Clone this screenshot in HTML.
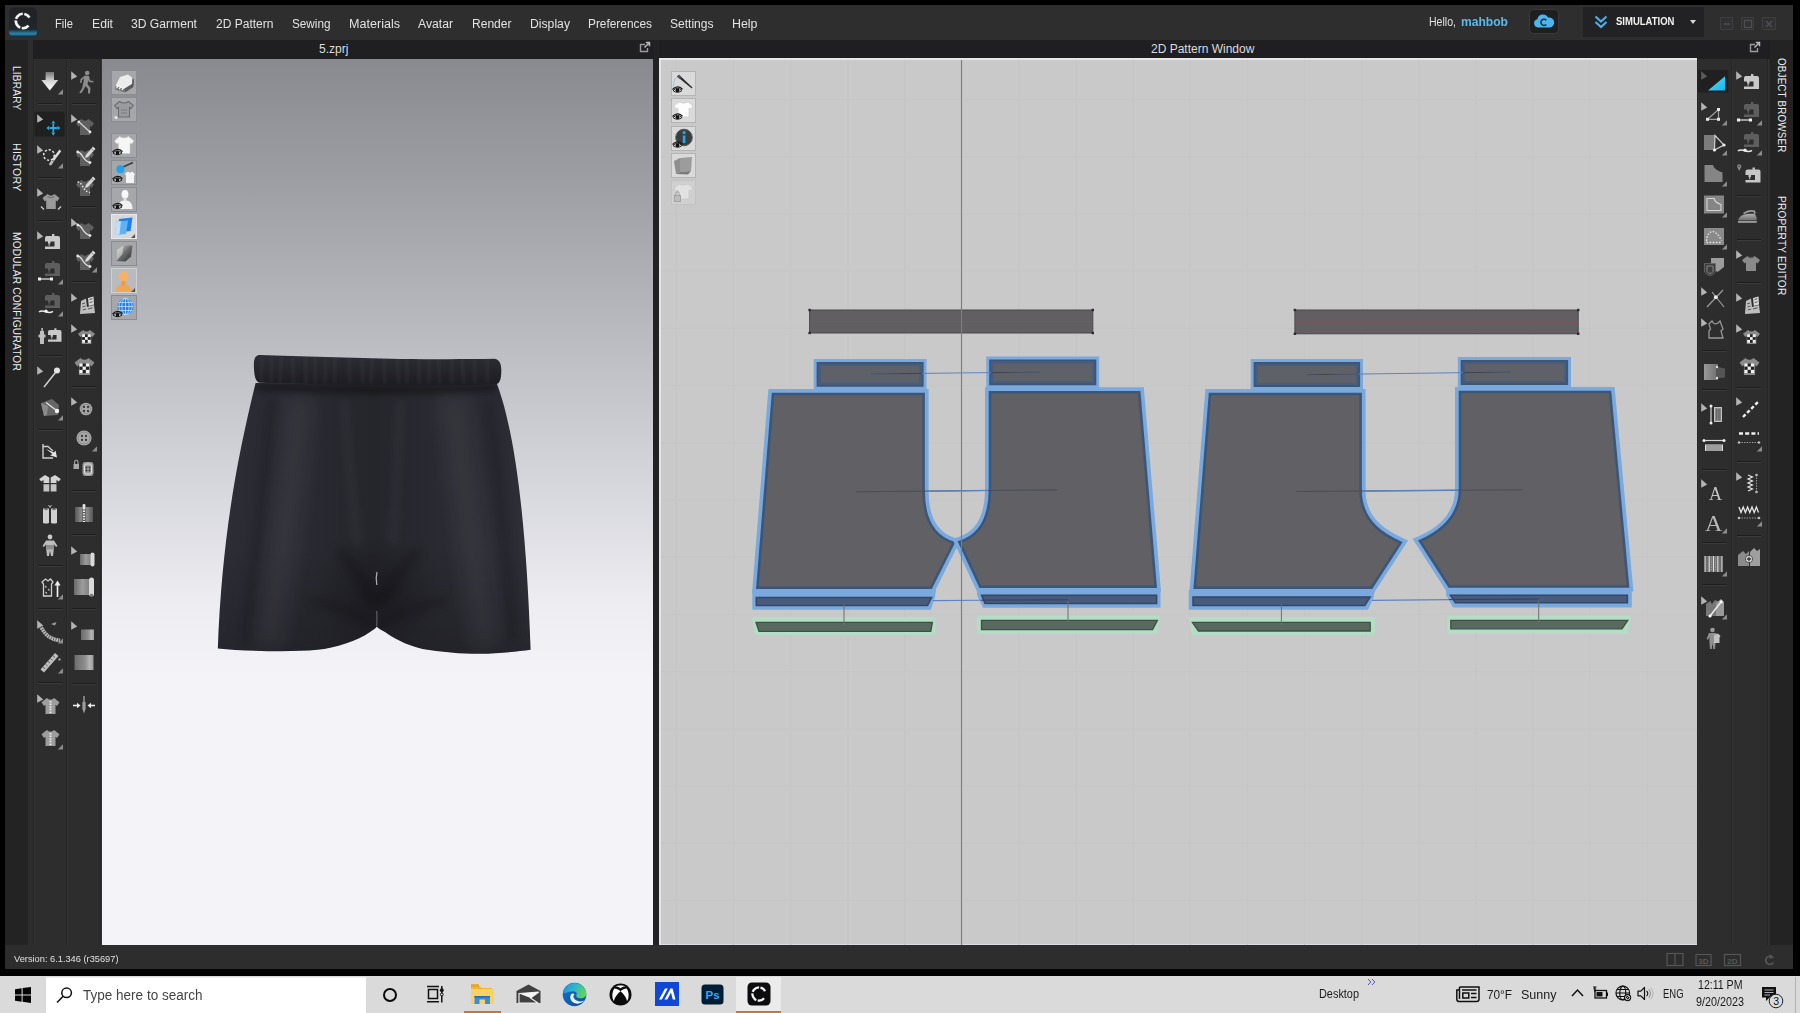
<!DOCTYPE html>
<html lang="en"><head><meta charset="utf-8"><title>CLO - 5.zprj</title>
<style>
*{box-sizing:border-box;margin:0;padding:0}
html,body{width:1800px;height:1013px;overflow:hidden;background:#000;font-family:"Liberation Sans",sans-serif;}
#root{position:absolute;left:0;top:0;width:1800px;height:1013px;background:#000;overflow:hidden}
.abs{position:absolute}
.menubar{left:5px;top:5px;width:1788px;height:35px;background:#2e2e2e}
.mi{position:absolute;top:16px;height:16px;line-height:16px;font-size:12.5px;color:#e2e2e2;white-space:nowrap;transform-origin:0 50%}
.ptitle{position:absolute;top:40px;height:19px;background:#1f1f22;color:#dcdcdc;font-size:12px;line-height:18px;text-align:center}
.vtabs{position:absolute;background:#232324}
.vt{position:absolute;color:#ececec;font-size:11px;letter-spacing:0.2px;white-space:nowrap;transform-origin:0 0;transform:rotate(90deg);line-height:12px;height:12px}
.tb{position:absolute;background:#2d2d2d}
.view3d{left:102px;top:59px;width:551px;height:886px;background:linear-gradient(to bottom,#898a8f 0px,#9d9ea3 120px,#b9babf 270px,#d7d8dd 430px,#ececf1 540px,#f3f3f8 620px,#f3f3f8 100%)}
.view2d{left:659px;top:58px;width:1038px;height:887px;background:#c9c9c9;border-left:2px solid #e6e6ea;border-top:2px solid #e6e6ea;border-bottom:1.5px solid #dedee2;overflow:hidden}
.status{left:5px;top:945px;width:1788px;height:24px;background:#2d2d2d}
.taskbar{left:0;top:976px;width:1800px;height:37px;background:#dadada}
.tic{filter:blur(0.35px)}
.tbtxt{position:absolute;color:#1a1a1a;white-space:nowrap}
</style></head>
<body><div id="root">
<div class="abs menubar"></div>
<span class="mi" style="left:55px;transform:scaleX(0.8930)" id="m0">File</span>
<span class="mi" style="left:91.5px;transform:scaleX(0.9746)" id="m1">Edit</span>
<span class="mi" style="left:131px;transform:scaleX(0.9693)" id="m2">3D Garment</span>
<span class="mi" style="left:215.5px;transform:scaleX(0.9621)" id="m3">2D Pattern</span>
<span class="mi" style="left:291.5px;transform:scaleX(0.9390)" id="m4">Sewing</span>
<span class="mi" style="left:348.5px;transform:scaleX(1.0055)" id="m5">Materials</span>
<span class="mi" style="left:418px;transform:scaleX(0.9748)" id="m6">Avatar</span>
<span class="mi" style="left:471.5px;transform:scaleX(0.9634)" id="m7">Render</span>
<span class="mi" style="left:529.5px;transform:scaleX(0.9756)" id="m8">Display</span>
<span class="mi" style="left:587.5px;transform:scaleX(0.9495)" id="m9">Preferences</span>
<span class="mi" style="left:670px;transform:scaleX(0.9630)" id="m10">Settings</span>
<span class="mi" style="left:732px;transform:scaleX(0.9915)" id="m11">Help</span>
<div class="ptitle" style="left:33px;width:620px"><span style="position:absolute;left:286px;top:0">5.zprj</span></div>
<div class="ptitle" style="left:659px;width:1111px"><span style="position:absolute;left:492px;top:0">2D Pattern Window</span></div>
<div class="abs" style="left:653px;top:40px;width:6px;height:905px;background:#222224"></div>
<div class="vtabs" style="left:5px;top:40px;width:23px;height:905px"></div>
<div class="abs" style="left:28px;top:40px;width:5px;height:905px;background:#2d2d2d"></div>
<span class="vt" style="left:23px;top:65.5px;transform:rotate(90deg) scaleX(0.9217)" id="vtl0">LIBRARY</span>
<span class="vt" style="left:23px;top:142.5px;transform:rotate(90deg) scaleX(0.9718)" id="vtl1">HISTORY</span>
<span class="vt" style="left:23px;top:231.5px;transform:rotate(90deg) scaleX(0.9250)" id="vtl2">MODULAR CONFIGURATOR</span>
<div class="vtabs" style="left:1770px;top:40px;width:23px;height:905px"></div>
<span class="vt" style="left:1787.5px;top:58px;transform:rotate(90deg) scaleX(0.8924)" id="vtr0">OBJECT BROWSER</span>
<span class="vt" style="left:1787.5px;top:196px;transform:rotate(90deg) scaleX(0.9253)" id="vtr1">PROPERTY EDITOR</span>
<div class="tb" style="left:33px;top:59px;width:69px;height:886px"></div>
<div class="tb" style="left:1697px;top:59px;width:73px;height:886px"></div>
<div class="abs view3d"></div>
<svg class="abs" style="left:8px;top:7px" width="30" height="31" viewBox="0 0 30 31">
<defs><linearGradient id="lg1" x1="0" y1="0" x2="0" y2="1"><stop offset="0" stop-color="#222225"/><stop offset="0.74" stop-color="#20262b"/><stop offset="0.85" stop-color="#256f93"/><stop offset="0.9" stop-color="#2a86b0"/><stop offset="0.96" stop-color="#1a4660"/><stop offset="1" stop-color="#1b2630"/></linearGradient></defs>
<rect x="1" y="0.5" width="28" height="29.5" rx="5" fill="url(#lg1)"/>
<circle cx="15" cy="14" r="7.2" fill="none" stroke="#f4f4f4" stroke-width="2.6" stroke-dasharray="7.5 1.5 9 1.5 9 1.5 6.5 8.8" transform="rotate(40 15 14)"/>
</svg>
<span class="mi" style="left:1428.5px;top:14px;font-size:12.5px;transform:scaleX(0.8446)" id="hello">Hello,</span>
<span class="mi" style="left:1460.5px;top:14px;font-size:12.5px;font-weight:bold;color:#5db9e9;transform:scaleX(0.9669)" id="uname">mahbob</span>
<svg class="abs" style="left:1529px;top:9px" width="30" height="25" viewBox="0 0 30 25">
<rect x="0.5" y="0.5" width="29" height="24" rx="4" fill="#1f1f21" stroke="#3a3a3c"/>
<path d="M9 18.5 a4.2 4.2 0 0 1 -0.6 -8.3 a5.6 5.6 0 0 1 10.6 -1.6 a4.6 4.6 0 0 1 2.2 9.9 z" fill="#4db4ee"/>
<path d="M17.3 11.2 a3.1 3.1 0 1 0 0 4.2" fill="none" stroke="#1f2d3a" stroke-width="1.5"/>
</svg>
<div class="abs" style="left:1583px;top:7px;width:121px;height:30px;background:#222224"></div>
<svg class="abs" style="left:1594px;top:14px" width="14" height="16" viewBox="0 0 14 16">
<path d="M1.5 2.5 L7 7.5 L12.5 2.5 M1.5 8 L7 13 L12.5 8" fill="none" stroke="#4db0e8" stroke-width="2.2"/></svg>
<span class="mi" style="left:1615.5px;top:14px;font-size:10px;font-weight:bold;color:#f2f2f2;transform:scaleX(0.9515)" id="simu">SIMULATION</span>
<div class="abs" style="left:1690px;top:20px;width:0;height:0;border-left:3.5px solid transparent;border-right:3.5px solid transparent;border-top:4px solid #d8d8d8"></div>
<svg class="abs" style="left:1718px;top:15px" width="62" height="18" viewBox="0 0 62 18">
<rect x="2.5" y="2.5" width="12" height="12" fill="#313133" stroke="#3e3e40"/><path d="M6 9 H12" stroke="#4e4e50" stroke-width="1.5"/>
<rect x="23.5" y="2.5" width="12" height="12" fill="#313133" stroke="#3e3e40"/><rect x="26.5" y="5.5" width="7" height="7" fill="none" stroke="#4e4e50" stroke-width="1.3"/>
<rect x="44.5" y="2.5" width="13" height="12" fill="#313133" stroke="#3e3e40"/><path d="M48 6 L54 12 M54 6 L48 12" stroke="#4e4e50" stroke-width="1.5"/>
</svg>
<svg class="abs" style="left:639px;top:41px" width="12" height="12" viewBox="0 0 12 12">
<path d="M6 3.5 H1.5 V10.5 H8.5 V7" fill="none" stroke="#9a9a9c" stroke-width="1.4"/><path d="M5.5 6.5 L10 2 M6.8 1.5 H10.5 V5.2" fill="none" stroke="#b8b8ba" stroke-width="1.5"/></svg>
<svg class="abs" style="left:1749px;top:41px" width="12" height="12" viewBox="0 0 12 12">
<path d="M6 3.5 H1.5 V10.5 H8.5 V7" fill="none" stroke="#9a9a9c" stroke-width="1.4"/><path d="M5.5 6.5 L10 2 M6.8 1.5 H10.5 V5.2" fill="none" stroke="#b8b8ba" stroke-width="1.5"/></svg>
<svg class="abs" style="left:200px;top:340px" width="350" height="330" viewBox="0 0 350 330">
<defs>
<linearGradient id="sg1" x1="0" y1="0" x2="1" y2="0"><stop offset="0" stop-color="#2e2e37"/><stop offset="0.10" stop-color="#2b2b34"/><stop offset="0.3" stop-color="#292931"/><stop offset="0.5" stop-color="#25252c"/><stop offset="0.72" stop-color="#2a2a32"/><stop offset="0.9" stop-color="#2b2b34"/><stop offset="1" stop-color="#2f2f38"/></linearGradient>
<linearGradient id="sg2" x1="0" y1="0" x2="0" y2="1"><stop offset="0" stop-color="#000" stop-opacity="0.0"/><stop offset="0.6" stop-color="#000" stop-opacity="0.0"/><stop offset="1" stop-color="#000" stop-opacity="0.18"/></linearGradient>
<radialGradient id="sg3" cx="0.5" cy="0.5" r="0.5"><stop offset="0" stop-color="#15151a" stop-opacity="0.55"/><stop offset="0.5" stop-color="#15151a" stop-opacity="0.25"/><stop offset="1" stop-color="#15151a" stop-opacity="0"/></radialGradient>
<linearGradient id="bg1" x1="0" y1="0" x2="0" y2="1"><stop offset="0" stop-color="#2d2d35"/><stop offset="0.45" stop-color="#25252c"/><stop offset="1" stop-color="#1c1c22"/></linearGradient>
<filter id="blr" filterUnits="userSpaceOnUse" x="0" y="0" width="350" height="330"><feGaussianBlur stdDeviation="10"/></filter>
<filter id="blr2" filterUnits="userSpaceOnUse" x="0" y="0" width="350" height="330"><feGaussianBlur stdDeviation="3"/></filter>
<filter id="nz" filterUnits="userSpaceOnUse" x="0" y="0" width="350" height="330" color-interpolation-filters="sRGB"><feTurbulence type="fractalNoise" baseFrequency="0.8" numOctaves="2" seed="3" result="n"/><feColorMatrix in="n" type="matrix" values="0 0 0 0 0.155  0 0 0 0 0.155  0 0 0 0 0.185  1.6 1.6 1.6 0 -2.1"/></filter>
<filter id="blr3" filterUnits="userSpaceOnUse" x="0" y="0" width="350" height="330"><feGaussianBlur stdDeviation="5"/></filter>
<filter id="blr4" filterUnits="userSpaceOnUse" x="0" y="0" width="350" height="330"><feGaussianBlur stdDeviation="1.6"/></filter>
<clipPath id="wclip"><path d="M53.9 27.0 C53.5 19.0 55.0 15.0 60.0 15.0 C100.0 16.2 150.0 18.0 200.0 18.9 C240.0 19.3 270.0 19.2 294.0 18.8 C299.5 19.0 301.5 24.0 301.3 31.0 C301.2 39.0 300.0 43.5 296.0 44.2 C260.0 45.5 230.0 45.8 200.0 45.6 C150.0 45.0 100.0 44.0 60.0 42.8 C55.5 42.3 54.2 36.0 53.9 27.0 Z"/></clipPath>
<clipPath id="bclip"><path d="M55.6 43.0 C36.0 123.0 22.0 200.0 17.8 308.4 C45.0 311.0 90.0 312.5 117.5 309.8 C135.0 308.0 158.0 301.0 170.0 292.0 C173.0 290.0 175.5 288.5 176.8 286.5 C178.5 288.5 181.0 290.0 185.0 292.0 C192.0 297.0 205.0 305.0 222.6 308.9 C240.0 312.0 265.0 314.0 280.0 313.8 C300.0 313.5 318.0 311.5 330.6 309.7 C327.0 204.0 318.0 100.0 297.0 44.0 Z"/></clipPath>
</defs>
<path d="M55.6 43.0 C36.0 123.0 22.0 200.0 17.8 308.4 C45.0 311.0 90.0 312.5 117.5 309.8 C135.0 308.0 158.0 301.0 170.0 292.0 C173.0 290.0 175.5 288.5 176.8 286.5 C178.5 288.5 181.0 290.0 185.0 292.0 C192.0 297.0 205.0 305.0 222.6 308.9 C240.0 312.0 265.0 314.0 280.0 313.8 C300.0 313.5 318.0 311.5 330.6 309.7 C327.0 204.0 318.0 100.0 297.0 44.0 Z" fill="url(#sg1)"/>
<g clip-path="url(#bclip)">
<path d="M55.6 43.0 C36.0 123.0 22.0 200.0 17.8 308.4 C45.0 311.0 90.0 312.5 117.5 309.8 C135.0 308.0 158.0 301.0 170.0 292.0 C173.0 290.0 175.5 288.5 176.8 286.5 C178.5 288.5 181.0 290.0 185.0 292.0 C192.0 297.0 205.0 305.0 222.6 308.9 C240.0 312.0 265.0 314.0 280.0 313.8 C300.0 313.5 318.0 311.5 330.6 309.7 C327.0 204.0 318.0 100.0 297.0 44.0 Z" fill="url(#sg2)"/>
<ellipse cx="177" cy="252" rx="62" ry="58" fill="url(#sg3)"/>
<g filter="url(#blr)" opacity="0.05">
<path d="M100.0 55.0 C94.0 130.0 82.0 220.0 68.0 308.0" stroke="#fff" stroke-width="30" fill="none"/>
<path d="M252.0 55.0 C262.0 130.0 274.0 220.0 286.0 308.0" stroke="#fff" stroke-width="30" fill="none"/>
</g>
<g filter="url(#blr3)" opacity="0.2">
<path d="M138.0 208.0 C152.0 226.0 166.0 244.0 174.0 266.0" stroke="#000" stroke-width="9" fill="none"/>
<path d="M220.0 208.0 C204.0 226.0 190.0 244.0 180.0 266.0" stroke="#000" stroke-width="9" fill="none"/>
<path d="M110.0 260.0 C135.0 266.0 158.0 274.0 174.0 284.0" stroke="#000" stroke-width="7" fill="none"/>
<path d="M246.0 260.0 C220.0 266.0 196.0 274.0 180.0 284.0" stroke="#000" stroke-width="7" fill="none"/>
</g>
<g filter="url(#blr3)" opacity="0.035">
<path d="M145.0 60.0 C148.0 110.0 152.0 160.0 158.0 205.0" stroke="#fff" stroke-width="8" fill="none"/>
<path d="M200.0 60.0 C198.0 110.0 196.0 160.0 192.0 205.0" stroke="#fff" stroke-width="8" fill="none"/>
</g>
<g filter="url(#blr3)" opacity="0.16">
<path d="M72.0 60.0 C66.0 130.0 56.0 220.0 46.0 300.0" stroke="#000" stroke-width="8" fill="none"/>
<path d="M288.0 60.0 C298.0 130.0 308.0 220.0 314.0 300.0" stroke="#000" stroke-width="8" fill="none"/>
</g>
<g filter="url(#blr2)" opacity="0.4">
<path d="M56.0 47.0 C130.0 50.0 220.0 51.0 297.0 48.0" stroke="#000" stroke-width="7" fill="none"/>
</g>
</g>
<path d="M53.9 27.0 C53.5 19.0 55.0 15.0 60.0 15.0 C100.0 16.2 150.0 18.0 200.0 18.9 C240.0 19.3 270.0 19.2 294.0 18.8 C299.5 19.0 301.5 24.0 301.3 31.0 C301.2 39.0 300.0 43.5 296.0 44.2 C260.0 45.5 230.0 45.8 200.0 45.6 C150.0 45.0 100.0 44.0 60.0 42.8 C55.5 42.3 54.2 36.0 53.9 27.0 Z" fill="url(#bg1)"/>
<g clip-path="url(#wclip)"><g filter="url(#blr4)" opacity="0.035">
<path d="M62.0 17.0 L61.2 44.0" stroke="#fff" stroke-width="3.5"/>
<path d="M71.5 17.0 L71.2 44.0" stroke="#fff" stroke-width="3.5"/>
<path d="M81.3 17.0 L80.0 44.0" stroke="#fff" stroke-width="3.5"/>
<path d="M92.3 17.0 L93.6 44.0" stroke="#fff" stroke-width="3.5"/>
<path d="M105.3 17.0 L106.1 44.0" stroke="#fff" stroke-width="3.5"/>
<path d="M115.4 17.0 L115.5 44.0" stroke="#fff" stroke-width="3.5"/>
<path d="M125.8 17.0 L124.8 44.0" stroke="#fff" stroke-width="3.5"/>
<path d="M135.3 17.0 L134.5 44.0" stroke="#fff" stroke-width="3.5"/>
<path d="M149.0 17.0 L149.9 44.0" stroke="#fff" stroke-width="3.5"/>
<path d="M162.0 17.0 L162.9 44.0" stroke="#fff" stroke-width="3.5"/>
<path d="M172.0 17.0 L171.4 44.0" stroke="#fff" stroke-width="3.5"/>
<path d="M184.1 17.0 L184.8 44.0" stroke="#fff" stroke-width="3.5"/>
<path d="M197.4 17.0 L198.5 44.0" stroke="#fff" stroke-width="3.5"/>
<path d="M206.8 17.0 L207.1 44.0" stroke="#fff" stroke-width="3.5"/>
<path d="M219.2 17.0 L219.2 44.0" stroke="#fff" stroke-width="3.5"/>
<path d="M229.1 17.0 L229.0 44.0" stroke="#fff" stroke-width="3.5"/>
<path d="M238.5 17.0 L239.8 44.0" stroke="#fff" stroke-width="3.5"/>
<path d="M251.8 17.0 L252.0 44.0" stroke="#fff" stroke-width="3.5"/>
<path d="M262.3 17.0 L263.6 44.0" stroke="#fff" stroke-width="3.5"/>
<path d="M274.2 17.0 L275.3 44.0" stroke="#fff" stroke-width="3.5"/>
<path d="M287.4 17.0 L287.5 44.0" stroke="#fff" stroke-width="3.5"/>
</g></g>
<path d="M177.0 232.0 C176.0 236.0 176.0 241.0 176.8 245.0" stroke="#c9c9d2" stroke-width="1.2" fill="none" opacity="0.85"/>
<path d="M176.8 271.0 C177.0 277.0 177.0 282.0 176.8 286.0" stroke="#8d8d98" stroke-width="1" fill="none" opacity="0.7"/>
</svg>
<svg class="abs" style="left:111px;top:70px" width="26" height="25" viewBox="0 0 26 25"><rect x="0.5" y="0.5" width="25" height="24" fill="#a6a7ab" stroke="#8b8c90" stroke-width="1"/><path d="M4.5 16 L9 7 L17 4.5 L21.5 8 L21 14 L13 19 Z" fill="#ececec"/><path d="M13 19 L21 14 L21.5 8 L23 10 L22.5 17 L14 22.5 Z" fill="#5a5a5c"/><path d="M4.5 16 L13 19 L14 22.5 L4 19.5 Z" fill="#77777a"/><path d="M5.5 18.3 L7 15.5 M8.3 19.2 L9.8 16.4 M11 20 L12.5 17.2" stroke="#fafafa" stroke-width="1.3"/></svg>
<svg class="abs" style="left:111px;top:97px" width="26" height="25" viewBox="0 0 26 25"><rect x="0.5" y="0.5" width="25" height="24" fill="#a6a7ab" stroke="#8b8c90" stroke-width="1"/><path d="M8.5 4.5 Q13 7.5 17.5 4.5 L22.5 8.5 L20 11.5 L18.5 10.5 V20 H7.5 V10.5 L6 11.5 L3.5 8.5 Z" fill="#9a9b9f" stroke="#6c6c70" stroke-width="1.1"/><path d="M10 13 H16 M10 16 H16" stroke="#7a7a7e" stroke-width="1"/><circle cx="5" cy="20.5" r="1.6" fill="#e6e6e6"/></svg>
<svg class="abs" style="left:111px;top:133px" width="26" height="25" viewBox="0 0 26 25"><rect x="0.5" y="0.5" width="25" height="24" fill="#a6a7ab" stroke="#8b8c90" stroke-width="1"/><path d="M8.5 3.5 Q13 6.5 17.5 3.5 L23 8 L20.5 11 L19 10 V20.5 H7.5 V10 L6 11 L3.5 8 Z" fill="#f6f6f6" stroke="#cfcfcf" stroke-width="0.6"/><path d="M2 20 Q6.5 15.8 11 20 Q6.5 23.4 2 20 Z" fill="#e8e8e8" stroke="#1a1a1a" stroke-width="1"/><circle cx="6.5" cy="19.8" r="1.9" fill="#111"/><path d="M1.5 19 Q6.5 14 11.5 18.7" fill="none" stroke="#1a1a1a" stroke-width="1.2"/></svg>
<svg class="abs" style="left:111px;top:160px" width="26" height="25" viewBox="0 0 26 25"><rect x="0.5" y="0.5" width="25" height="24" fill="#a6a7ab" stroke="#8b8c90" stroke-width="1"/><path d="M14 13.5 L17 11.5 L19 13 L21 11.5 L24 14 L23 16 V23 H15 V16 Z" fill="#f4f4f4"/><path d="M11 7.5 L22 2.5" stroke="#3b3b3b" stroke-width="1.4"/><circle cx="9.3" cy="9.2" r="4" fill="#1fa4ec"/><path d="M2 20 Q6.5 15.8 11 20 Q6.5 23.4 2 20 Z" fill="#e8e8e8" stroke="#1a1a1a" stroke-width="1"/><circle cx="6.5" cy="19.8" r="1.9" fill="#111"/><path d="M1.5 19 Q6.5 14 11.5 18.7" fill="none" stroke="#1a1a1a" stroke-width="1.2"/></svg>
<svg class="abs" style="left:111px;top:187px" width="26" height="25" viewBox="0 0 26 25"><rect x="0.5" y="0.5" width="25" height="24" fill="#a6a7ab" stroke="#8b8c90" stroke-width="1"/><ellipse cx="14" cy="7.3" rx="3.4" ry="4.3" fill="#f8f8f8"/><path d="M7 22 C7 15 10 13.5 14 13.5 C18 13.5 21.5 15 21.5 22 Z" fill="#f2f2f2"/><rect x="12.6" y="10.5" width="2.8" height="4" fill="#e6e6e6"/><path d="M2 20 Q6.5 15.8 11 20 Q6.5 23.4 2 20 Z" fill="#e8e8e8" stroke="#1a1a1a" stroke-width="1"/><circle cx="6.5" cy="19.8" r="1.9" fill="#111"/><path d="M1.5 19 Q6.5 14 11.5 18.7" fill="none" stroke="#1a1a1a" stroke-width="1.2"/></svg>
<svg class="abs" style="left:111px;top:214px" width="26" height="25" viewBox="0 0 26 25"><rect x="0.5" y="0.5" width="25" height="24" fill="#a6a7ab" stroke="#8b8c90" stroke-width="1"/><rect x="0.5" y="0.5" width="25" height="24" fill="#d6d8dc" stroke="#e8e8ea"/><path d="M8 5 L21.5 3.5 L19.5 17 L6.5 18.5 Z" fill="#1f7fe6"/><path d="M5.5 7.5 L17 6.5 L15 20 L4 21 Z" fill="#5eb2f6"/><path d="M5.5 7.5 L10 7.1 L8.5 20.6 L4 21 Z" fill="#bfe0fb"/><path d="M24 20 V24 H20 Z" fill="#555"/></svg>
<svg class="abs" style="left:111px;top:241px" width="26" height="25" viewBox="0 0 26 25"><rect x="0.5" y="0.5" width="25" height="24" fill="#a6a7ab" stroke="#8b8c90" stroke-width="1"/><defs><linearGradient id="gsh" x1="0" y1="0" x2="1" y2="1"><stop offset="0" stop-color="#d8d8d8"/><stop offset="0.5" stop-color="#6a6a6c"/><stop offset="1" stop-color="#2e2e30"/></linearGradient></defs><path d="M6 9 L12.5 4.5 L21.5 4.5 L20 15.5 L14.5 20.5 L5.5 20 Z" fill="url(#gsh)"/><path d="M6 9 L12.5 4.5 L11.5 13 L5.5 20 Z" fill="#e4e4e4" opacity="0.55"/></svg>
<svg class="abs" style="left:111px;top:268px" width="26" height="25" viewBox="0 0 26 25"><rect x="0.5" y="0.5" width="25" height="24" fill="#a6a7ab" stroke="#8b8c90" stroke-width="1"/><rect x="0.5" y="0.5" width="25" height="24" fill="#b9babd" stroke="#d0d0d2"/><ellipse cx="12.5" cy="8.8" rx="4.6" ry="5.6" fill="#f3b266"/><path d="M4.5 23.5 C5 17.5 8.5 16.5 12.5 16.5 C16.5 16.5 20 17.5 20.5 23.5 Z" fill="#f0a655"/><rect x="10.6" y="13" width="3.8" height="4.5" fill="#e89b48"/><path d="M24 20 V24 H20 Z" fill="#555"/></svg>
<svg class="abs" style="left:111px;top:295px" width="26" height="25" viewBox="0 0 26 25"><rect x="0.5" y="0.5" width="25" height="24" fill="#a6a7ab" stroke="#8b8c90" stroke-width="1"/><circle cx="14.5" cy="11.5" r="8.2" fill="#2a7fd8"/><g fill="none" stroke="#bfe0ff" stroke-width="0.8"><ellipse cx="14.5" cy="11.5" rx="3.6" ry="8.2"/><ellipse cx="14.5" cy="11.5" rx="6.6" ry="8.2"/><path d="M6.3 11.5 H22.7 M7.3 7.5 H21.7 M7.3 15.5 H21.7 M14.5 3.3 V19.7"/></g><path d="M2 20 Q6.5 15.8 11 20 Q6.5 23.4 2 20 Z" fill="#e8e8e8" stroke="#1a1a1a" stroke-width="1"/><circle cx="6.5" cy="19.8" r="1.9" fill="#111"/><path d="M1.5 19 Q6.5 14 11.5 18.7" fill="none" stroke="#1a1a1a" stroke-width="1.2"/></svg>
<div class="abs view2d"></div>
<svg class="abs" style="left:661px;top:60px" width="1036" height="885" viewBox="0 0 1036 885">
<path d="M15.5 0 V885 M72.6 0 V885 M129.7 0 V885 M186.8 0 V885 M243.9 0 V885 M301.0 0 V885 M358.1 0 V885 M415.2 0 V885 M472.3 0 V885 M529.4 0 V885 M586.5 0 V885 M643.6 0 V885 M700.7 0 V885 M757.8 0 V885 M814.9 0 V885 M872.0 0 V885 M929.1 0 V885 M986.2 0 V885 M0 39.6 H1036 M0 96.8 H1036 M0 154.0 H1036 M0 211.2 H1036 M0 268.4 H1036 M0 325.6 H1036 M0 382.8 H1036 M0 440.0 H1036 M0 497.2 H1036 M0 554.4 H1036 M0 611.6 H1036 M0 668.8 H1036 M0 726.0 H1036 M0 783.2 H1036 M0 840.4 H1036" stroke="#c6c6c7" stroke-width="1.2" fill="none"/>
<rect x="148.6" y="250.0" width="283.2" height="23.0" fill="#625f63" stroke="#4a484c" stroke-width="1"/>
<path d="M148.6 261.5 H431.8" stroke="#9c484e" stroke-width="1"/>
<rect x="147.4" y="248.8" width="2.4" height="2.4" fill="#2a2a2c"/>
<rect x="430.6" y="248.8" width="2.4" height="2.4" fill="#2a2a2c"/>
<rect x="147.4" y="271.8" width="2.4" height="2.4" fill="#2a2a2c"/>
<rect x="430.6" y="271.8" width="2.4" height="2.4" fill="#2a2a2c"/>
<polygon points="156.7,303.0 261.5,303.0 261.5,325.7 156.7,325.7" fill="#7aa9de" stroke="#7aa9de" stroke-width="8" stroke-linejoin="miter"/><polygon points="156.7,303.0 261.5,303.0 261.5,325.7 156.7,325.7" fill="#5f6168" stroke="#3c5679" stroke-width="2.2" stroke-linejoin="miter"/><polygon points="158.7,305.0 259.5,305.0 259.5,323.7 158.7,323.7" fill="none" stroke="#475d7e" stroke-width="2.2"/>
<polygon points="329.3,300.5 434.2,300.5 434.2,324.2 329.3,324.2" fill="#7aa9de" stroke="#7aa9de" stroke-width="8" stroke-linejoin="miter"/><polygon points="329.3,300.5 434.2,300.5 434.2,324.2 329.3,324.2" fill="#5f6168" stroke="#3c5679" stroke-width="2.2" stroke-linejoin="miter"/><polygon points="331.3,302.5 432.2,302.5 432.2,322.2 331.3,322.2" fill="none" stroke="#475d7e" stroke-width="2.2"/>
<path d="M112.0 334.0 L262.6 334.0 L262.6 431.0 C262.6 465.0 277.0 478.0 292.6 482.8 L270.0 527.8 L96.4 527.8 Z" fill="#7aa9de" stroke="#7aa9de" stroke-width="10" stroke-linejoin="miter"/><path d="M112.0 334.0 L262.6 334.0 L262.6 431.0 C262.6 465.0 277.0 478.0 292.6 482.8 L270.0 527.8 L96.4 527.8 Z" fill="#616064" stroke="#3c5679" stroke-width="2.6" stroke-linejoin="miter"/>
<path d="M329.0 332.3 L478.2 332.3 L494.6 526.7 L319.3 526.7 L298.4 482.0 C314.3 477.2 329.0 463.0 329.0 429.0 Z" fill="#7aa9de" stroke="#7aa9de" stroke-width="10" stroke-linejoin="miter"/><path d="M329.0 332.3 L478.2 332.3 L494.6 526.7 L319.3 526.7 L298.4 482.0 C314.3 477.2 329.0 463.0 329.0 429.0 Z" fill="#616064" stroke="#3c5679" stroke-width="2.6" stroke-linejoin="miter"/>
<polygon points="91.3,530.0 275.0,530.0 274.0,537.0 269.8,549.8 91.3,549.8" fill="#7aa9de"/>
<polygon points="95.3,537.5 270.6,537.5 266.6,545.6 95.3,545.6" fill="#485b7c" stroke="#33476a" stroke-width="1.5" stroke-linejoin="miter"/>
<polygon points="316.0,528.0 499.5,528.0 499.5,547.7 322.0,547.7 316.0,535.0" fill="#7aa9de"/>
<polygon points="320.6,535.3 495.6,535.3 495.6,543.4 324.0,543.4" fill="#485b7c" stroke="#33476a" stroke-width="1.5" stroke-linejoin="miter"/>
<polygon points="91.0,557.0 274.7,557.0 274.7,575.0 93.5,575.0" fill="#b5dcc5"/>
<polygon points="95.0,562.3 271.4,562.3 269.8,571.3 98.0,571.3" fill="#586a60" stroke="#3e5046" stroke-width="1.3" stroke-linejoin="miter"/>
<polygon points="316.0,555.6 499.0,555.6 497.0,573.7 316.0,573.7" fill="#b5dcc5"/>
<polygon points="320.5,560.3 496.4,560.3 491.6,569.6 320.5,569.6" fill="#586a60" stroke="#3e5046" stroke-width="1.3" stroke-linejoin="miter"/>
<path d="M209.7 314.0 L379.6 312.0" stroke="#5e83bd" stroke-width="1.1"/>
<path d="M195.0 431.7 L396.0 429.9" stroke="#4a4e58" stroke-width="1.1"/>
<path d="M265.0 431.2 L327.0 430.4" stroke="#5e83bd" stroke-width="1.4"/>
<path d="M272.0 540.6 L320.0 540.2" stroke="#5e83bd" stroke-width="1.1"/>
<path d="M320.0 540.2 L407.0 539.8" stroke="#2f4263" stroke-width="1"/>
<path d="M183.0 544.0 L183.0 565.0" stroke="#6c6e70" stroke-width="1"/>
<path d="M407.0 541.0 L407.0 562.0" stroke="#6c6e70" stroke-width="1"/>
<path d="M209.7 314.0 L261.0 313.4" stroke="#45464c" stroke-width="1.1"/>
<path d="M330.0 312.6 L379.6 312.0" stroke="#45464c" stroke-width="1.1"/>
<rect x="633.9" y="250.0" width="283.3" height="23.8" fill="#625f63" stroke="#4a484c" stroke-width="1"/>
<path d="M633.9 261.9 H917.2" stroke="#9c484e" stroke-width="1"/>
<rect x="632.7" y="248.8" width="2.4" height="2.4" fill="#2a2a2c"/>
<rect x="916.0" y="248.8" width="2.4" height="2.4" fill="#2a2a2c"/>
<rect x="632.7" y="272.6" width="2.4" height="2.4" fill="#2a2a2c"/>
<rect x="916.0" y="272.6" width="2.4" height="2.4" fill="#2a2a2c"/>
<polygon points="593.7,303.0 698.0,303.0 698.0,326.0 593.7,326.0" fill="#7aa9de" stroke="#7aa9de" stroke-width="8" stroke-linejoin="miter"/><polygon points="593.7,303.0 698.0,303.0 698.0,326.0 593.7,326.0" fill="#5f6168" stroke="#3c5679" stroke-width="2.2" stroke-linejoin="miter"/><polygon points="595.7,305.0 696.0,305.0 696.0,324.0 595.7,324.0" fill="none" stroke="#475d7e" stroke-width="2.2"/>
<polygon points="800.8,301.0 906.0,301.0 906.0,324.0 800.8,324.0" fill="#7aa9de" stroke="#7aa9de" stroke-width="8" stroke-linejoin="miter"/><polygon points="800.8,301.0 906.0,301.0 906.0,324.0 800.8,324.0" fill="#5f6168" stroke="#3c5679" stroke-width="2.2" stroke-linejoin="miter"/><polygon points="802.8,303.0 904.0,303.0 904.0,322.0 802.8,322.0" fill="none" stroke="#475d7e" stroke-width="2.2"/>
<path d="M549.0 334.0 L699.6 334.0 L699.6 430.8 C699.6 463.8 727.0 477.0 739.7 482.6 L710.5 527.6 L533.8 527.6 Z" fill="#7aa9de" stroke="#7aa9de" stroke-width="10" stroke-linejoin="miter"/><path d="M549.0 334.0 L699.6 334.0 L699.6 430.8 C699.6 463.8 727.0 477.0 739.7 482.6 L710.5 527.6 L533.8 527.6 Z" fill="#616064" stroke="#3c5679" stroke-width="2.6" stroke-linejoin="miter"/>
<path d="M799.0 332.0 L949.0 332.0 L967.0 526.5 L788.3 526.5 L759.0 481.0 C771.7 475.4 799.0 462.0 799.0 429.0 Z" fill="#7aa9de" stroke="#7aa9de" stroke-width="10" stroke-linejoin="miter"/><path d="M799.0 332.0 L949.0 332.0 L967.0 526.5 L788.3 526.5 L759.0 481.0 C771.7 475.4 799.0 462.0 799.0 429.0 Z" fill="#616064" stroke="#3c5679" stroke-width="2.6" stroke-linejoin="miter"/>
<polygon points="527.7,530.0 713.8,530.0 712.8,537.0 707.0,549.8 527.7,549.8" fill="#7aa9de"/>
<polygon points="532.0,537.0 709.2,537.0 703.8,545.6 532.0,545.6" fill="#485b7c" stroke="#33476a" stroke-width="1.5" stroke-linejoin="miter"/>
<polygon points="785.0,528.0 970.8,528.0 970.8,547.4 792.0,547.4 785.0,535.0" fill="#7aa9de"/>
<polygon points="789.4,535.3 966.4,535.3 966.4,542.8 794.4,542.8" fill="#485b7c" stroke="#33476a" stroke-width="1.5" stroke-linejoin="miter"/>
<polygon points="527.7,557.0 714.0,557.0 714.0,575.0 531.0,575.0" fill="#b5dcc5"/>
<polygon points="531.4,562.3 709.2,562.3 709.2,571.0 537.4,571.0" fill="#586a60" stroke="#3e5046" stroke-width="1.3" stroke-linejoin="miter"/>
<polygon points="786.7,555.6 970.0,555.6 967.0,573.7 786.7,573.7" fill="#b5dcc5"/>
<polygon points="789.8,560.3 966.8,560.3 961.0,568.8 789.8,568.8" fill="#586a60" stroke="#3e5046" stroke-width="1.3" stroke-linejoin="miter"/>
<path d="M646.0 314.7 L850.4 312.0" stroke="#5e83bd" stroke-width="1.1"/>
<path d="M635.0 431.5 L861.3 429.7" stroke="#4a4e58" stroke-width="1.1"/>
<path d="M702.0 431.0 L797.0 430.2" stroke="#5e83bd" stroke-width="1.4"/>
<path d="M711.0 540.4 L788.0 539.6" stroke="#5e83bd" stroke-width="1.1"/>
<path d="M788.0 539.6 L877.7 539.0" stroke="#2f4263" stroke-width="1"/>
<path d="M620.4 544.0 L620.4 565.0" stroke="#6c6e70" stroke-width="1"/>
<path d="M877.7 541.0 L877.7 562.0" stroke="#6c6e70" stroke-width="1"/>
<path d="M646.0 314.7 L698.0 314.0" stroke="#45464c" stroke-width="1.1"/>
<path d="M802.0 312.6 L850.4 312.0" stroke="#45464c" stroke-width="1.1"/>
<path d="M300.5 0 V885" stroke="#7d7d7f" stroke-width="1.1"/>
</svg>
<svg class="abs" style="left:671px;top:70.5px" width="25" height="25" viewBox="0 0 25 25"><rect x="0.5" y="0.5" width="24" height="24" fill="#dadada" stroke="#b4b4b4"/><path d="M2 18 L3.5 8 L8 5" fill="none" stroke="#9cc3e6" stroke-width="1"/><path d="M6 5.5 L8 3.8 L21.5 16.5 L20.8 17.6 Z" fill="#2b2b2b"/><path d="M6 5.5 L8 3.8 L10.5 6.2 L8.6 8 Z" fill="#555"/><path d="M2 19.5 Q6.5 15.2 11 19.5 Q6.5 23 2 19.5 Z" fill="#efefef" stroke="#1a1a1a" stroke-width="1"/><circle cx="6.5" cy="19.3" r="1.9" fill="#111"/><path d="M1.5 18.5 Q6.5 13.5 11.5 18.2" fill="none" stroke="#1a1a1a" stroke-width="1.2"/></svg>
<svg class="abs" style="left:671px;top:98px" width="25" height="25" viewBox="0 0 25 25"><rect x="0.5" y="0.5" width="24" height="24" fill="#dadada" stroke="#b4b4b4"/><path d="M8 4 Q12.5 6.5 17 4 L22 8 L19.5 11 L18 10 V19 H7 V10 L5.5 11 L3 8 Z" fill="#fdfdfd" stroke="#c8c8c8" stroke-width="0.6"/><path d="M2 19.5 Q6.5 15.2 11 19.5 Q6.5 23 2 19.5 Z" fill="#efefef" stroke="#1a1a1a" stroke-width="1"/><circle cx="6.5" cy="19.3" r="1.9" fill="#111"/><path d="M1.5 18.5 Q6.5 13.5 11.5 18.2" fill="none" stroke="#1a1a1a" stroke-width="1.2"/></svg>
<svg class="abs" style="left:671px;top:125.5px" width="25" height="25" viewBox="0 0 25 25"><rect x="0.5" y="0.5" width="24" height="24" fill="#dadada" stroke="#b4b4b4"/><circle cx="13" cy="11.5" r="8.3" fill="#3a3d40"/><circle cx="13" cy="11.5" r="8.3" fill="none" stroke="#55595c" stroke-width="1"/><rect x="11.8" y="9.5" width="2.6" height="7.5" fill="#27a9e0"/><circle cx="13.1" cy="6.6" r="1.6" fill="#27a9e0"/><path d="M2 19.5 Q6.5 15.2 11 19.5 Q6.5 23 2 19.5 Z" fill="#efefef" stroke="#1a1a1a" stroke-width="1"/><circle cx="6.5" cy="19.3" r="1.9" fill="#111"/><path d="M1.5 18.5 Q6.5 13.5 11.5 18.2" fill="none" stroke="#1a1a1a" stroke-width="1.2"/></svg>
<svg class="abs" style="left:671px;top:152.5px" width="25" height="25" viewBox="0 0 25 25"><rect x="0.5" y="0.5" width="24" height="24" fill="#dadada" stroke="#b4b4b4"/><path d="M3 8 L9 5 V19 L5 21 Z" fill="#8e8e8e"/><path d="M9 5 L21 4 L20 18 L9 19 Z" fill="#9c9c9c"/><path d="M5 21 L9 19 L20 18 L17 21.5 Z" fill="#7a7a7a"/></svg>
<svg class="abs" style="left:671px;top:180px" width="25" height="25" viewBox="0 0 25 25"><rect x="0.5" y="0.5" width="24" height="24" fill="#d0d0d0" stroke="#c2c2c2"/><path d="M8 4 Q12.5 6.5 17 4 L22 8 L19.5 11 L18 10 V19 H7 V10 L5.5 11 L3 8 Z" fill="#e2e2e2" stroke="#c4c4c4" stroke-width="0.6"/><rect x="3.5" y="15.5" width="6" height="6" fill="#bdbdbd" stroke="#9a9a9a" stroke-width="0.8"/><path d="M4.8 15.5 V13.5 a1.7 1.7 0 0 1 3.4 0 V15.5" fill="none" stroke="#9a9a9a" stroke-width="0.9"/></svg>
<div class="abs" style="left:33px;top:59px;width:1px;height:886px;background:#262626"></div>
<div class="abs" style="left:34px;top:59px;width:1px;height:886px;background:#323232"></div>
<div class="abs" style="left:66px;top:59px;width:1px;height:886px;background:#262626"></div>
<div class="abs" style="left:67px;top:59px;width:1px;height:886px;background:#323232"></div>
<div class="abs" style="left:100px;top:59px;width:1px;height:886px;background:#262626"></div>
<div class="abs" style="left:101px;top:59px;width:1px;height:886px;background:#323232"></div>
<div class="abs" style="left:1697px;top:59px;width:1px;height:886px;background:#262626"></div>
<div class="abs" style="left:1698px;top:59px;width:1px;height:886px;background:#323232"></div>
<div class="abs" style="left:1731px;top:59px;width:1px;height:886px;background:#262626"></div>
<div class="abs" style="left:1732px;top:59px;width:1px;height:886px;background:#323232"></div>
<div class="abs" style="left:1767px;top:59px;width:1px;height:886px;background:#262626"></div>
<div class="abs" style="left:1768px;top:59px;width:1px;height:886px;background:#323232"></div>
<svg class="abs tic" style="left:35px;top:67px;overflow:visible" width="30" height="30" viewBox="0 0 30 30"><defs><linearGradient id="adg1" x1="0" y1="0" x2="0" y2="1"><stop offset="0" stop-color="#777"/><stop offset="0.5" stop-color="#d8d8d8"/><stop offset="1" stop-color="#ffffff"/></linearGradient></defs><path d="M10.6 5 H19 V13 H23.3 L14.8 23.6 L6.3 13 H10.6 Z" fill="url(#adg1)"/><path d="M28 22.3 V27.5 H22.8 Z" fill="#8c8c8c"/></svg>
<svg class="abs tic" style="left:35px;top:110px;overflow:visible" width="30" height="30" viewBox="0 0 30 30"><rect x="-0.5" y="1.7" width="30" height="24.8" fill="#202021"/><path d="M2.2 4.3 L2.2 12.8 L8.2 9.4 Z" fill="#b4b4b4"/><g fill="#29abe2" transform="translate(18.3 18) scale(0.72 0.78) translate(-15.2 -15.2)"><path d="M14 10 H16.4 V14 H20.5 V16.4 H16.4 V20.5 H14 V16.4 H10 V14 H14 Z"/><path d="M15.2 5.5 L18 9.5 H12.4 Z M15.2 25 L18 21 H12.4 Z M5.5 15.2 L9.5 12.4 V18 Z M25 15.2 L21 12.4 V18 Z"/></g></svg>
<svg class="abs tic" style="left:35px;top:141px;overflow:visible" width="30" height="30" viewBox="0 0 30 30"><path d="M2.2 4.3 L2.2 12.8 L8.2 9.4 Z" fill="#b4b4b4"/><circle cx="14" cy="14" r="5.3" fill="none" stroke="#e6e6e6" stroke-width="1.5" stroke-dasharray="2.2 1.8"/><path d="M24.5 8.5 L26.2 10.2 L19 20 L16.8 18.5 Z" fill="#dedede"/><path d="M16.6 19 L18.8 20.4 L16.5 24 C15 25 13.6 24 14.3 22.6 Z" fill="#bdbdbd"/><path d="M28 22.3 V27.5 H22.8 Z" fill="#8c8c8c"/></svg>
<svg class="abs tic" style="left:35px;top:184px;overflow:visible" width="30" height="30" viewBox="0 0 30 30"><path d="M2.2 4.3 L2.2 12.8 L8.2 9.4 Z" fill="#b4b4b4"/><path d="M12.6 10.0 Q16.0 13.3 19.4 10.0 L24.5 14.1 L22.1 17.5 L20.8 16.3 V25.0 H11.2 V16.3 L9.9 17.5 L7.5 14.1 Z" fill="#9a9a9a"/><path d="M12.5 12.6 Q16 15 19.5 12.6" fill="none" stroke="#6e6e6e" stroke-width="1"/><path d="M6 22.5 L9 25.5 M26 22.5 L23 25.5" stroke="#cfcfcf" stroke-width="1.3"/></svg>
<svg class="abs tic" style="left:35px;top:227px;overflow:visible" width="30" height="30" viewBox="0 0 30 30"><path d="M2.2 4.3 L2.2 12.8 L8.2 9.4 Z" fill="#b4b4b4"/><g><path d="M10 11 Q10 9 12 9 H23 Q25 9 25 11 V22 H10 V19.5 H19.5 V14.5 H15.5 V16.5 H13 V14.5 H10 Z" fill="#c9c9c9"/><rect x="13.6" y="16.3" width="1.1" height="2.4" fill="#c9c9c9"/><rect x="17" y="7" width="2.4" height="2.4" fill="#c9c9c9"/></g></svg>
<svg class="abs tic" style="left:35px;top:257px;overflow:visible" width="30" height="30" viewBox="0 0 30 30"><g transform="translate(0 -3) scale(1.0)"><path d="M10 11 Q10 9 12 9 H23 Q25 9 25 11 V22 H10 V19.5 H19.5 V14.5 H15.5 V16.5 H13 V14.5 H10 Z" fill="#5e5e5e"/><rect x="13.6" y="16.3" width="1.1" height="2.4" fill="#5e5e5e"/><rect x="17" y="7" width="2.4" height="2.4" fill="#5e5e5e"/></g><path d="M4.5 22 H16.5" stroke="#e8e8e8" stroke-width="1.2"/><rect x="3" y="20.5" width="3" height="3" fill="#f0f0f0"/><rect x="15" y="20.5" width="3" height="3" fill="#f0f0f0"/><path d="M28 22.3 V27.5 H22.8 Z" fill="#8c8c8c"/></svg>
<svg class="abs tic" style="left:35px;top:289px;overflow:visible" width="30" height="30" viewBox="0 0 30 30"><g transform="translate(0 -3) scale(1.0)"><path d="M10 11 Q10 9 12 9 H23 Q25 9 25 11 V22 H10 V19.5 H19.5 V14.5 H15.5 V16.5 H13 V14.5 H10 Z" fill="#5e5e5e"/><rect x="13.6" y="16.3" width="1.1" height="2.4" fill="#5e5e5e"/><rect x="17" y="7" width="2.4" height="2.4" fill="#5e5e5e"/></g><path d="M4 23.1 C8 18.8 12 26.3 18 22.3 " fill="none" stroke="#e8e8e8" stroke-width="1.5"/><circle cx="11" cy="22.1" r="1.7" fill="#f0f0f0"/><path d="M28 22.3 V27.5 H22.8 Z" fill="#8c8c8c"/></svg>
<svg class="abs tic" style="left:35px;top:321px;overflow:visible" width="30" height="30" viewBox="0 0 30 30"><g transform="translate(4 1) scale(0.9)"><path d="M10 11 Q10 9 12 9 H23 Q25 9 25 11 V22 H10 V19.5 H19.5 V14.5 H15.5 V16.5 H13 V14.5 H10 Z" fill="#c9c9c9"/><rect x="13.6" y="16.3" width="1.1" height="2.4" fill="#c9c9c9"/><rect x="17" y="7" width="2.4" height="2.4" fill="#c9c9c9"/></g><path d="M5 10 H9 V23 H5 Z M3.5 13.5 H10.5 V16.5 H3.5 Z" fill="#bdbdbd"/><rect x="6.3" y="7" width="1.6" height="4" fill="#bdbdbd"/></svg>
<svg class="abs tic" style="left:35px;top:362px;overflow:visible" width="30" height="30" viewBox="0 0 30 30"><path d="M2.2 4.3 L2.2 12.8 L8.2 9.4 Z" fill="#b4b4b4"/><path d="M9 25 L20.5 10.5" stroke="#d2d2d2" stroke-width="1.5"/><circle cx="22" cy="8.5" r="3" fill="#e4e4e4"/></svg>
<svg class="abs tic" style="left:35px;top:393px;overflow:visible" width="30" height="30" viewBox="0 0 30 30"><path d="M6 10 L17 6 L24 12 L23 22 L9 23 Z" fill="#666"/><path d="M6 10 L13 13 L12 22 L9 23 Z" fill="#8a8a8a"/><path d="M11 9.5 L21.5 17.5" stroke="#e8e8e8" stroke-width="1.3"/><circle cx="22" cy="18" r="2.2" fill="#f2f2f2"/><path d="M28 22.3 V27.5 H22.8 Z" fill="#8c8c8c"/></svg>
<svg class="abs tic" style="left:35px;top:437px;overflow:visible" width="30" height="30" viewBox="0 0 30 30"><path d="M8 7 V21 H18" fill="none" stroke="#cfcfcf" stroke-width="1.4"/><path d="M8 9.5 H13 L18 14" fill="none" stroke="#cfcfcf" stroke-width="1.3"/><path d="M11 12 L17.5 17 L15 18.3 L22 20.5 L20.5 13.5 L19 15.5 Z" fill="#e6e6e6"/></svg>
<svg class="abs tic" style="left:35px;top:468px;overflow:visible" width="30" height="30" viewBox="0 0 30 30"><path d="M10 7 L14.3 9.5 V15 H8.5 V12 L6.2 13.5 L4.2 11 Z" fill="#d4d4d4"/><path d="M20 7 L15.7 9.5 V15 H21.5 V12 L23.8 13.5 L25.8 11 Z" fill="#d4d4d4"/><rect x="8.5" y="16.2" width="5.8" height="7.3" fill="#c4c4c4"/><rect x="15.7" y="16.2" width="5.8" height="7.3" fill="#c4c4c4"/></svg>
<svg class="abs tic" style="left:35px;top:499px;overflow:visible" width="30" height="30" viewBox="0 0 30 30"><path d="M8 9 Q11 10.5 14 9 V24 Q11 25 8 24 Z" fill="#d0d0d0"/><path d="M16 9 Q19 10.5 22 9 V24 Q19 25 16 24 Z" fill="#d0d0d0"/><path d="M8 9 Q11 12.5 14 9 M16 9 Q19 12.5 22 9" fill="none" stroke="#6b6b6b" stroke-width="1"/><path d="M13.5 6 L15 8.5 L16.5 6" fill="none" stroke="#bbb" stroke-width="1"/></svg>
<svg class="abs tic" style="left:35px;top:530px;overflow:visible" width="30" height="30" viewBox="0 0 30 30"><circle cx="15" cy="7" r="2.4" fill="#c9c9c9"/><path d="M11 10.5 H19 L22.5 16 L21 17 L18.8 14.2 V19 L18 26 H16 L15 20.5 L14 26 H12 L11.2 19 V14.2 L9 17 L7.5 16 Z" fill="#bdbdbd"/><path d="M11.2 15 H18.8 V19.5 H11.2 Z" fill="#8d8d8d"/></svg>
<svg class="abs tic" style="left:35px;top:572px;overflow:visible" width="30" height="30" viewBox="0 0 30 30"><path d="M7 10 L10.5 7 L13 9 L15.5 7 L18 10 L16.5 12 V24 H8.5 V12 Z" fill="none" stroke="#cfcfcf" stroke-width="1.3"/><path d="M10 14 l1.5 1.5 M13 17 l1.5 1.5 M10.5 20 l1.5 1.5" stroke="#bdbdbd" stroke-width="1.1"/><path d="M22.5 25 V13" stroke="#ececec" stroke-width="1.7"/><path d="M22.5 8.5 L25.6 13.6 H19.4 Z" fill="#ececec"/><path d="M28 22.3 V27.5 H22.8 Z" fill="#8c8c8c"/></svg>
<svg class="abs tic" style="left:35px;top:616px;overflow:visible" width="30" height="30" viewBox="0 0 30 30"><path d="M2.2 4.3 L2.2 12.8 L8.2 9.4 Z" fill="#b4b4b4"/><path d="M6 11 C10 19 15 23 25 24.5" fill="none" stroke="#bdbdbd" stroke-width="3.6"/><path d="M6 11 C10 19 15 23 25 24.5" fill="none" stroke="#505050" stroke-width="3.6" stroke-dasharray="0.9 1.6"/><path d="M16 8 L21.5 6 L20 9.5" fill="#a0a0a0"/><path d="M28 22.3 V27.5 H22.8 Z" fill="#8c8c8c"/></svg>
<svg class="abs tic" style="left:35px;top:646px;overflow:visible" width="30" height="30" viewBox="0 0 30 30"><path d="M5.5 23.5 L20 7 L23.5 10 L9 26.5 Z" fill="#bdbdbd"/><path d="M8 21 L10 22.7 M10.5 18.2 L12.5 19.9 M13 15.4 L15 17.1 M15.5 12.6 L17.5 14.3 M18 9.8 L20 11.5" stroke="#555" stroke-width="0.9"/><circle cx="24.5" cy="13.5" r="1.2" fill="#999"/><path d="M28 22.3 V27.5 H22.8 Z" fill="#8c8c8c"/></svg>
<svg class="abs tic" style="left:35px;top:690px;overflow:visible" width="30" height="30" viewBox="0 0 30 30"><path d="M2.2 4.3 L2.2 12.8 L8.2 9.4 Z" fill="#b4b4b4"/><path d="M11.9 8.0 Q15.5 11.5 19.1 8.0 L24.5 12.3 L22.0 16.0 L20.5 14.7 V24.0 H10.5 V14.7 L9.0 16.0 L6.5 12.3 Z" fill="#9d9d9d"/><path d="M15.5 11 V24" stroke="#f0f0f0" stroke-width="1.8" stroke-dasharray="1.5 1.1"/></svg>
<svg class="abs tic" style="left:35px;top:722px;overflow:visible" width="30" height="30" viewBox="0 0 30 30"><path d="M11.9 8.0 Q15.5 11.5 19.1 8.0 L24.5 12.3 L22.0 16.0 L20.5 14.7 V24.0 H10.5 V14.7 L9.0 16.0 L6.5 12.3 Z" fill="#9d9d9d"/><path d="M15.5 11 V24" stroke="#f0f0f0" stroke-width="1.8" stroke-dasharray="1.5 1.1"/><path d="M28 22.3 V27.5 H22.8 Z" fill="#8c8c8c"/></svg>
<div class="abs" style="left:38px;top:103px;width:24px;height:1px;background:#1d1d1d"></div><div class="abs" style="left:38px;top:104px;width:24px;height:1px;background:#3b3b3b"></div>
<div class="abs" style="left:38px;top:177px;width:24px;height:1px;background:#1d1d1d"></div><div class="abs" style="left:38px;top:178px;width:24px;height:1px;background:#3b3b3b"></div>
<div class="abs" style="left:38px;top:220px;width:24px;height:1px;background:#1d1d1d"></div><div class="abs" style="left:38px;top:221px;width:24px;height:1px;background:#3b3b3b"></div>
<div class="abs" style="left:38px;top:355px;width:24px;height:1px;background:#1d1d1d"></div><div class="abs" style="left:38px;top:356px;width:24px;height:1px;background:#3b3b3b"></div>
<div class="abs" style="left:38px;top:429px;width:24px;height:1px;background:#1d1d1d"></div><div class="abs" style="left:38px;top:430px;width:24px;height:1px;background:#3b3b3b"></div>
<div class="abs" style="left:38px;top:565px;width:24px;height:1px;background:#1d1d1d"></div><div class="abs" style="left:38px;top:566px;width:24px;height:1px;background:#3b3b3b"></div>
<div class="abs" style="left:38px;top:608px;width:24px;height:1px;background:#1d1d1d"></div><div class="abs" style="left:38px;top:609px;width:24px;height:1px;background:#3b3b3b"></div>
<div class="abs" style="left:38px;top:682px;width:24px;height:1px;background:#1d1d1d"></div><div class="abs" style="left:38px;top:683px;width:24px;height:1px;background:#3b3b3b"></div>
<svg class="abs tic" style="left:69px;top:67px;overflow:visible" width="30" height="30" viewBox="0 0 30 30"><path d="M2.2 4.3 L2.2 12.8 L8.2 9.4 Z" fill="#b4b4b4"/><g fill="#8c8c8c"><circle cx="18.2" cy="6" r="2.3"/><path d="M16 8.5 L20 9 L21 13.5 L24.5 14 L24.3 15.5 L19.8 15 L19.3 13 L18.5 17 L21.5 21 L21 26.5 L19 26.5 L19 22 L16.5 19 L14.5 23 L12 26.5 L10.3 25.5 L13 21.5 L14.5 15 L15 11.5 L13 13 L12.5 16 L11 15.8 L11.5 12 Z"/></g></svg>
<svg class="abs tic" style="left:69px;top:110px;overflow:visible" width="30" height="30" viewBox="0 0 30 30"><path d="M2.2 4.3 L2.2 12.8 L8.2 9.4 Z" fill="#b4b4b4"/><path d="M12.4 9.0 Q16.0 12.5 19.6 9.0 L25.0 13.3 L22.5 17.0 L21.0 15.7 V25.0 H11.0 V15.7 L9.5 17.0 L7.0 13.3 Z" fill="#5f5f5f"/><path d="M9.5 11.5 L21 22" stroke="#d9d9d9" stroke-width="1.1"/><circle cx="9.8" cy="11.8" r="1.4" fill="#e8e8e8"/><circle cx="21" cy="22" r="1.4" fill="#e8e8e8"/></svg>
<svg class="abs tic" style="left:69px;top:141px;overflow:visible" width="30" height="30" viewBox="0 0 30 30"><path d="M12.4 9.0 Q16.0 12.5 19.6 9.0 L25.0 13.3 L22.5 17.0 L21.0 15.7 V25.0 H11.0 V15.7 L9.5 17.0 L7.0 13.3 Z" fill="#5f5f5f"/><path d="M8.5 11 C14 11 13 20 21 21.5" fill="none" stroke="#e2e2e2" stroke-width="1.3"/><circle cx="8.7" cy="11" r="1.4" fill="#e8e8e8"/><circle cx="21" cy="21.6" r="1.4" fill="#e8e8e8"/><path d="M24 5.5 L26.5 8 L19 16 L16 17 L16.8 14 Z" fill="#d8d8d8"/><path d="M22.3 7.4 L24.6 9.7" stroke="#777" stroke-width="0.9"/></svg>
<svg class="abs tic" style="left:69px;top:171px;overflow:visible" width="30" height="30" viewBox="0 0 30 30"><path d="M12.4 9.0 Q16.0 12.5 19.6 9.0 L25.0 13.3 L22.5 17.0 L21.0 15.7 V25.0 H11.0 V15.7 L9.5 17.0 L7.0 13.3 Z" fill="#5f5f5f"/><path d="M8.5 11 C14 11 13 20 21 21.5" fill="none" stroke="#e2e2e2" stroke-width="1.6" stroke-dasharray="1.6 1.6"/><path d="M24 5.5 L26.5 8 L19 16 L16 17 L16.8 14 Z" fill="#d8d8d8"/><path d="M22.3 7.4 L24.6 9.7" stroke="#777" stroke-width="0.9"/></svg>
<svg class="abs tic" style="left:69px;top:214px;overflow:visible" width="30" height="30" viewBox="0 0 30 30"><path d="M2.2 4.3 L2.2 12.8 L8.2 9.4 Z" fill="#b4b4b4"/><path d="M12.4 9.0 Q16.0 12.5 19.6 9.0 L25.0 13.3 L22.5 17.0 L21.0 15.7 V25.0 H11.0 V15.7 L9.5 17.0 L7.0 13.3 Z" fill="#5f5f5f"/><path d="M8.5 11 C14 11 13 20 21 21.5" fill="none" stroke="#e2e2e2" stroke-width="1.3"/><circle cx="8.7" cy="11" r="1.4" fill="#e8e8e8"/><circle cx="21" cy="21.6" r="1.4" fill="#e8e8e8"/></svg>
<svg class="abs tic" style="left:69px;top:245px;overflow:visible" width="30" height="30" viewBox="0 0 30 30"><path d="M12.4 9.0 Q16.0 12.5 19.6 9.0 L25.0 13.3 L22.5 17.0 L21.0 15.7 V25.0 H11.0 V15.7 L9.5 17.0 L7.0 13.3 Z" fill="#5f5f5f"/><path d="M8.5 11 C14 11 13 20 21 21.5" fill="none" stroke="#e2e2e2" stroke-width="1.3"/><circle cx="8.7" cy="11" r="1.4" fill="#e8e8e8"/><circle cx="21" cy="21.6" r="1.4" fill="#e8e8e8"/><path d="M24 5.5 L26.5 8 L19 16 L16 17 L16.8 14 Z" fill="#d8d8d8"/><path d="M22.3 7.4 L24.6 9.7" stroke="#777" stroke-width="0.9"/><path d="M28 22.3 V27.5 H22.8 Z" fill="#8c8c8c"/></svg>
<svg class="abs tic" style="left:69px;top:289px;overflow:visible" width="30" height="30" viewBox="0 0 30 30"><path d="M2.2 4.3 L2.2 12.8 L8.2 9.4 Z" fill="#b4b4b4"/><path d="M12 12 L17 9.5 L18 18 L25 16 L26 24 L11 25 Z" fill="#bfbfbf"/><path d="M19 9 L24.5 7.5 L25 15.5 L19.8 17 Z" fill="#d6d6d6"/><path d="M13 15 l3 -1 M13.5 18 l3 -1 M13.8 21 l3.4 -1 M19 20 l4.5 -1.2 M20.5 10.5 l2.8 -0.8 M20.8 13.5 l2.8 -0.8" stroke="#555" stroke-width="1"/></svg>
<svg class="abs tic" style="left:69px;top:320px;overflow:visible" width="30" height="30" viewBox="0 0 30 30"><path d="M2.2 4.3 L2.2 12.8 L8.2 9.4 Z" fill="#b4b4b4"/><path d="M14.1 10.0 Q17.5 13.1 20.9 10.0 L26.0 13.8 L23.6 17.0 L22.3 15.9 V24.0 H12.7 V15.9 L11.4 17.0 L9.0 13.8 Z" fill="#8a8a8a"/><rect x="13.2" y="14.3" width="2.8" height="2.8" fill="#f2f2f2"/><rect x="13.2" y="17.1" width="2.8" height="2.8" fill="#222"/><rect x="13.2" y="19.9" width="2.8" height="2.8" fill="#f2f2f2"/><rect x="16.0" y="14.3" width="2.8" height="2.8" fill="#222"/><rect x="16.0" y="17.1" width="2.8" height="2.8" fill="#f2f2f2"/><rect x="16.0" y="19.9" width="2.8" height="2.8" fill="#222"/><rect x="18.8" y="14.3" width="2.8" height="2.8" fill="#f2f2f2"/><rect x="18.8" y="17.1" width="2.8" height="2.8" fill="#222"/><rect x="18.8" y="19.9" width="2.8" height="2.8" fill="#f2f2f2"/></svg>
<svg class="abs tic" style="left:69px;top:351px;overflow:visible" width="30" height="30" viewBox="0 0 30 30"><path d="M11.5 7.0 Q15.5 10.7 19.5 7.0 L25.5 11.6 L22.7 15.5 L21.1 14.1 V24.0 H9.9 V14.1 L8.3 15.5 L5.5 11.6 Z" fill="#8a8a8a"/><rect x="10.5" y="12.5" width="3.2" height="3.2" fill="#f2f2f2"/><rect x="10.5" y="15.7" width="3.2" height="3.2" fill="#222"/><rect x="10.5" y="18.9" width="3.2" height="3.2" fill="#f2f2f2"/><rect x="13.7" y="12.5" width="3.2" height="3.2" fill="#222"/><rect x="13.7" y="15.7" width="3.2" height="3.2" fill="#f2f2f2"/><rect x="13.7" y="18.9" width="3.2" height="3.2" fill="#222"/><rect x="16.9" y="12.5" width="3.2" height="3.2" fill="#f2f2f2"/><rect x="16.9" y="15.7" width="3.2" height="3.2" fill="#222"/><rect x="16.9" y="18.9" width="3.2" height="3.2" fill="#f2f2f2"/></svg>
<svg class="abs tic" style="left:69px;top:393px;overflow:visible" width="30" height="30" viewBox="0 0 30 30"><path d="M2.2 4.3 L2.2 12.8 L8.2 9.4 Z" fill="#b4b4b4"/><circle cx="17" cy="16" r="6.3" fill="#a9a9a9"/><circle cx="17" cy="16" r="4.699999999999999" fill="none" stroke="#8a8a8a" stroke-width="1"/><circle cx="15" cy="14" r="1.15" fill="#3a3a3a"/><circle cx="15" cy="18" r="1.15" fill="#3a3a3a"/><circle cx="19" cy="14" r="1.15" fill="#3a3a3a"/><circle cx="19" cy="18" r="1.15" fill="#3a3a3a"/></svg>
<svg class="abs tic" style="left:69px;top:424px;overflow:visible" width="30" height="30" viewBox="0 0 30 30"><circle cx="15" cy="14" r="7.6" fill="#a9a9a9"/><circle cx="15" cy="14" r="6.0" fill="none" stroke="#8a8a8a" stroke-width="1"/><circle cx="13" cy="12" r="1.15" fill="#3a3a3a"/><circle cx="13" cy="16" r="1.15" fill="#3a3a3a"/><circle cx="17" cy="12" r="1.15" fill="#3a3a3a"/><circle cx="17" cy="16" r="1.15" fill="#3a3a3a"/><path d="M28 22.3 V27.5 H22.8 Z" fill="#8c8c8c"/></svg>
<svg class="abs tic" style="left:69px;top:454px;overflow:visible" width="30" height="30" viewBox="0 0 30 30"><rect x="4.5" y="10" width="5.5" height="5" fill="#a8a8a8"/><path d="M5.6 10 V8 a1.7 1.7 0 0 1 3.4 0 V10" fill="none" stroke="#a8a8a8" stroke-width="1.1"/><rect x="13.5" y="8" width="11" height="14" rx="3" fill="#9b9b9b"/><rect x="15.5" y="10" width="7" height="10" rx="2" fill="none" stroke="#e2e2e2" stroke-width="1"/><circle cx="17.5" cy="13.5" r="1" fill="#333"/><circle cx="20.5" cy="13.5" r="1" fill="#333"/><circle cx="17.5" cy="16.5" r="1" fill="#333"/><circle cx="20.5" cy="16.5" r="1" fill="#333"/></svg>
<svg class="abs tic" style="left:69px;top:499px;overflow:visible" width="30" height="30" viewBox="0 0 30 30"><defs><linearGradient id="zg32" x1="0" y1="0" x2="1" y2="0"><stop offset="0" stop-color="#555"/><stop offset="0.35" stop-color="#8c8c8c"/><stop offset="0.5" stop-color="#444"/><stop offset="0.65" stop-color="#8c8c8c"/><stop offset="1" stop-color="#555"/></linearGradient></defs><rect x="6" y="8" width="18" height="15" fill="url(#zg32)"/><path d="M15 9 V23" stroke="#efefef" stroke-width="2" stroke-dasharray="1.4 1.2"/><rect x="13.6" y="5" width="2.8" height="5" rx="1.2" fill="#e2e2e2"/></svg>
<svg class="abs tic" style="left:69px;top:542px;overflow:visible" width="30" height="30" viewBox="0 0 30 30"><path d="M2.2 4.3 L2.2 12.8 L8.2 9.4 Z" fill="#b4b4b4"/><defs><linearGradient id="rg33" x1="0" y1="0" x2="1" y2="0"><stop offset="0" stop-color="#6a6a6a"/><stop offset="0.5" stop-color="#9c9c9c"/><stop offset="1" stop-color="#7a7a7a"/></linearGradient></defs><rect x="11" y="12" width="12" height="11" fill="url(#rg33)"/><rect x="21.5" y="10.5" width="4" height="14" rx="2" fill="#dadada"/></svg>
<svg class="abs tic" style="left:69px;top:572px;overflow:visible" width="30" height="30" viewBox="0 0 30 30"><defs><linearGradient id="rg34" x1="0" y1="0" x2="1" y2="0"><stop offset="0" stop-color="#6a6a6a"/><stop offset="0.5" stop-color="#9c9c9c"/><stop offset="1" stop-color="#7a7a7a"/></linearGradient></defs><rect x="5" y="7" width="17" height="16" fill="url(#rg34)"/><rect x="20" y="5.5" width="5" height="19" rx="2.5" fill="#dadada"/><ellipse cx="22.5" cy="23" rx="1.6" ry="1.2" fill="#777"/></svg>
<svg class="abs tic" style="left:69px;top:617px;overflow:visible" width="30" height="30" viewBox="0 0 30 30"><path d="M2.2 4.3 L2.2 12.8 L8.2 9.4 Z" fill="#b4b4b4"/><defs><linearGradient id="fg35" x1="0" y1="0" x2="1" y2="0"><stop offset="0" stop-color="#6c6c6c"/><stop offset="0.55" stop-color="#8e8e8e"/><stop offset="0.8" stop-color="#b5b5b5"/><stop offset="1" stop-color="#9a9a9a"/></linearGradient></defs><rect x="12" y="12.5" width="13" height="10.5" fill="url(#fg35)"/></svg>
<svg class="abs tic" style="left:69px;top:647px;overflow:visible" width="30" height="30" viewBox="0 0 30 30"><defs><linearGradient id="fg36" x1="0" y1="0" x2="1" y2="0"><stop offset="0" stop-color="#6c6c6c"/><stop offset="0.55" stop-color="#8e8e8e"/><stop offset="0.8" stop-color="#b5b5b5"/><stop offset="1" stop-color="#9a9a9a"/></linearGradient></defs><rect x="5.5" y="8" width="19" height="15" fill="url(#fg36)"/></svg>
<svg class="abs tic" style="left:69px;top:690px;overflow:visible" width="30" height="30" viewBox="0 0 30 30"><path d="M15 6 V12" stroke="#cfcfcf" stroke-width="1"/><path d="M13.4 12 H16.6 V19 L15 23.5 L13.4 19 Z" fill="#9e9e9e"/><path d="M4 15.5 H9" stroke="#ececec" stroke-width="1.6"/><path d="M11.5 15.5 L8 12.8 V18.2 Z" fill="#ececec"/><path d="M26 15.5 H21" stroke="#ececec" stroke-width="1.6"/><path d="M18.5 15.5 L22 12.8 V18.2 Z" fill="#ececec"/></svg>
<div class="abs" style="left:72px;top:103px;width:24px;height:1px;background:#1d1d1d"></div><div class="abs" style="left:72px;top:104px;width:24px;height:1px;background:#3b3b3b"></div>
<div class="abs" style="left:72px;top:206px;width:24px;height:1px;background:#1d1d1d"></div><div class="abs" style="left:72px;top:207px;width:24px;height:1px;background:#3b3b3b"></div>
<div class="abs" style="left:72px;top:281px;width:24px;height:1px;background:#1d1d1d"></div><div class="abs" style="left:72px;top:282px;width:24px;height:1px;background:#3b3b3b"></div>
<div class="abs" style="left:72px;top:386px;width:24px;height:1px;background:#1d1d1d"></div><div class="abs" style="left:72px;top:387px;width:24px;height:1px;background:#3b3b3b"></div>
<div class="abs" style="left:72px;top:490px;width:24px;height:1px;background:#1d1d1d"></div><div class="abs" style="left:72px;top:491px;width:24px;height:1px;background:#3b3b3b"></div>
<div class="abs" style="left:72px;top:534px;width:24px;height:1px;background:#1d1d1d"></div><div class="abs" style="left:72px;top:535px;width:24px;height:1px;background:#3b3b3b"></div>
<div class="abs" style="left:72px;top:608px;width:24px;height:1px;background:#1d1d1d"></div><div class="abs" style="left:72px;top:609px;width:24px;height:1px;background:#3b3b3b"></div>
<div class="abs" style="left:72px;top:683px;width:24px;height:1px;background:#1d1d1d"></div><div class="abs" style="left:72px;top:684px;width:24px;height:1px;background:#3b3b3b"></div>
<svg class="abs tic" style="left:1699px;top:67px;overflow:visible" width="30" height="30" viewBox="0 0 30 30"><rect x="-1" y="3" width="30.5" height="22.3" fill="#202021"/><path d="M2.2 4.3 L2.2 12.8 L8.2 9.4 Z" fill="#5c5c5c"/><defs><linearGradient id="ctg38" x1="0" y1="0" x2="1" y2="1"><stop offset="0" stop-color="#5fe0ff"/><stop offset="1" stop-color="#12b4ea"/></linearGradient></defs><path d="M26 9.3 V23.6 H9 Z" fill="url(#ctg38)"/></svg>
<svg class="abs tic" style="left:1699px;top:98px;overflow:visible" width="30" height="30" viewBox="0 0 30 30"><path d="M2.2 4.3 L2.2 12.8 L8.2 9.4 Z" fill="#b4b4b4"/><path d="M8.5 21.3 L19.5 11.5 L19.5 21.3 Z" fill="none" stroke="#a0a0a0" stroke-width="1.2"/><rect x="7" y="19.8" width="3" height="3" fill="#e6e6e6"/><rect x="18" y="10" width="3" height="3" fill="#e6e6e6"/><rect x="18" y="19.8" width="3" height="3" fill="#e6e6e6"/><path d="M28 22.3 V27.5 H22.8 Z" fill="#8c8c8c"/></svg>
<svg class="abs tic" style="left:1699px;top:128px;overflow:visible" width="30" height="30" viewBox="0 0 30 30"><path d="M5 7 H16 V22 H5 Z" fill="#7b7b7b"/><path d="M16 7.5 L25 17 L15.5 22 Z" fill="none" stroke="#cfcfcf" stroke-width="1.2"/><circle cx="25" cy="17" r="1.6" fill="#eee"/><circle cx="15.5" cy="22" r="1.6" fill="#eee"/><path d="M28 22.3 V27.5 H22.8 Z" fill="#8c8c8c"/></svg>
<svg class="abs tic" style="left:1699px;top:159px;overflow:visible" width="30" height="30" viewBox="0 0 30 30"><path d="M5.5 6 H14 Q15 11 23.5 13.5 V23 H5.5 Z" fill="#858585"/><path d="M28 22.3 V27.5 H22.8 Z" fill="#8c8c8c"/></svg>
<svg class="abs tic" style="left:1699px;top:190px;overflow:visible" width="30" height="30" viewBox="0 0 30 30"><rect x="5" y="5.5" width="20" height="18" fill="#858585"/><path d="M8 8.5 H15 Q16 12.5 22 14.5 V20.5 H8 Z" fill="none" stroke="#d4d4d4" stroke-width="1.1"/><path d="M28 22.3 V27.5 H22.8 Z" fill="#8c8c8c"/></svg>
<svg class="abs tic" style="left:1699px;top:222px;overflow:visible" width="30" height="30" viewBox="0 0 30 30"><rect x="5" y="6" width="20" height="17" fill="#8a8a8a"/><path d="M7.5 19 Q8 10 14 9.5 Q19 11 22.5 18.5 M7.5 20.5 H22.5" fill="none" stroke="#e6e6e6" stroke-width="1.3" stroke-dasharray="1.6 1.5"/><path d="M28 22.3 V27.5 H22.8 Z" fill="#8c8c8c"/></svg>
<svg class="abs tic" style="left:1699px;top:252px;overflow:visible" width="30" height="30" viewBox="0 0 30 30"><path d="M12 6 H25 V15 L18.5 20 L12 15 Z" fill="#9c9c9c"/><path d="M5.5 11.5 H16.5 V20 Q11 27 5.5 20 Z" fill="#3e3e3e" stroke="#6a6a6a" stroke-width="0.8"/><path d="M8 14 H14 V19.5 Q11 23.5 8 19.5 Z" fill="none" stroke="#858585" stroke-width="1"/></svg>
<svg class="abs tic" style="left:1699px;top:283px;overflow:visible" width="30" height="30" viewBox="0 0 30 30"><path d="M2.2 4.3 L2.2 12.8 L8.2 9.4 Z" fill="#b4b4b4"/><path d="M8 24 L24 7 M13 9 L25 24" stroke="#9c9c9c" stroke-width="1.2"/><circle cx="16.8" cy="14.2" r="1.9" fill="#f0f0f0"/></svg>
<svg class="abs tic" style="left:1699px;top:314px;overflow:visible" width="30" height="30" viewBox="0 0 30 30"><path d="M2.2 4.3 L2.2 12.8 L8.2 9.4 Z" fill="#b4b4b4"/><path d="M10 10 L13 7 Q15 11.5 19 9 L21 7 L24 15 L22 17 L24 24 H10 V17 L11.5 15 Z" fill="none" stroke="#969696" stroke-width="1.3"/></svg>
<svg class="abs tic" style="left:1699px;top:357px;overflow:visible" width="30" height="30" viewBox="0 0 30 30"><defs><linearGradient id="frg47" x1="0" y1="0" x2="1" y2="0"><stop offset="0" stop-color="#9a9a9a"/><stop offset="1" stop-color="#6e6e6e"/></linearGradient></defs><rect x="5" y="7" width="14" height="16" fill="url(#frg47)"/><path d="M17 9.5 L26 11.5 V20.5 L17 21.5 Z" fill="#555"/><circle cx="18" cy="10" r="1.2" fill="#ddd"/><circle cx="18" cy="21" r="1.2" fill="#ddd"/></svg>
<svg class="abs tic" style="left:1699px;top:399px;overflow:visible" width="30" height="30" viewBox="0 0 30 30"><path d="M2.2 4.3 L2.2 12.8 L8.2 9.4 Z" fill="#b4b4b4"/><path d="M12 7 V24" stroke="#d6d6d6" stroke-width="1.2"/><circle cx="12" cy="7" r="1.5" fill="#eee"/><circle cx="12" cy="24" r="1.5" fill="#eee"/><rect x="15.5" y="8.5" width="7" height="14" fill="#8d8d8d" stroke="#cfcfcf" stroke-width="0.9"/><path d="M17.5 10 V21 M19.2 10 V21 M20.8 10 V21" stroke="#5a5a5a" stroke-width="0.8"/></svg>
<svg class="abs tic" style="left:1699px;top:430px;overflow:visible" width="30" height="30" viewBox="0 0 30 30"><path d="M5 10.5 H25" stroke="#d6d6d6" stroke-width="1.2"/><circle cx="5" cy="10.5" r="1.5" fill="#eee"/><circle cx="25" cy="10.5" r="1.5" fill="#eee"/><rect x="6" y="14.5" width="18" height="6.5" fill="#e0e0e0"/><path d="M8 15 V21 M10 15 V21 M12 15 V21 M14 15 V21 M16 15 V21 M18 15 V21 M20 15 V21 M22 15 V21" stroke="#4a4a4a" stroke-width="0.9"/></svg>
<svg class="abs tic" style="left:1699px;top:475px;overflow:visible" width="30" height="30" viewBox="0 0 30 30"><path d="M2.2 4.3 L2.2 12.8 L8.2 9.4 Z" fill="#b4b4b4"/><text x="10" y="25" font-family="Liberation Serif, serif" font-size="18" fill="#c4c4c4">A</text></svg>
<svg class="abs tic" style="left:1699px;top:506px;overflow:visible" width="30" height="30" viewBox="0 0 30 30"><text x="6" y="25" font-family="Liberation Serif, serif" font-size="24" fill="#b9b9b9">A</text><path d="M28 22.3 V27.5 H22.8 Z" fill="#8c8c8c"/></svg>
<svg class="abs tic" style="left:1699px;top:549px;overflow:visible" width="30" height="30" viewBox="0 0 30 30"><rect x="6" y="7" width="17" height="16" fill="#6e6e6e"/><path d="M6 7 V23 M10.2 7 V23 M14.5 7 V23 M18.8 7 V23 M23 7 V23" stroke="#dcdcdc" stroke-width="1.1"/><path d="M12.3 8 V22 M16.6 8 V22" stroke="#bdbdbd" stroke-width="0.8" stroke-dasharray="1.2 1.2"/><path d="M28 22.3 V27.5 H22.8 Z" fill="#8c8c8c"/></svg>
<svg class="abs tic" style="left:1699px;top:592px;overflow:visible" width="30" height="30" viewBox="0 0 30 30"><path d="M2.2 4.3 L2.2 12.8 L8.2 9.4 Z" fill="#b4b4b4"/><path d="M7 12 L11 9 L13 12 L16 8 L20 10 V24 H7 Z" fill="#777"/><path d="M17 11 L22 7 L25 10 V24 H17 Z" fill="#999"/><path d="M11 24 L22 10" stroke="#f2f2f2" stroke-width="1.4"/><circle cx="11" cy="24" r="1.6" fill="#fff"/><circle cx="22.2" cy="9.8" r="1.6" fill="#fff"/><path d="M28 22.3 V27.5 H22.8 Z" fill="#8c8c8c"/></svg>
<svg class="abs tic" style="left:1699px;top:623px;overflow:visible" width="30" height="30" viewBox="0 0 30 30"><circle cx="13.5" cy="7" r="2.3" fill="#9a9a9a"/><path d="M10 10 H17 L19.5 16 L18 16.8 L16.6 14 V19 L16 26 H14.3 L13.5 20.5 L12.7 26 H11 L10.4 19 V14 L9 16.8 L7.5 16 Z" fill="#8f8f8f"/><path d="M15 12 L19 10.5 L21.5 13 L20.5 14.5 V20 H15 Z" fill="#c2c2c2"/></svg>
<div class="abs" style="left:1702px;top:350px;width:24px;height:1px;background:#1d1d1d"></div><div class="abs" style="left:1702px;top:351px;width:24px;height:1px;background:#3b3b3b"></div>
<div class="abs" style="left:1702px;top:389px;width:24px;height:1px;background:#1d1d1d"></div><div class="abs" style="left:1702px;top:390px;width:24px;height:1px;background:#3b3b3b"></div>
<div class="abs" style="left:1702px;top:469px;width:24px;height:1px;background:#1d1d1d"></div><div class="abs" style="left:1702px;top:470px;width:24px;height:1px;background:#3b3b3b"></div>
<div class="abs" style="left:1702px;top:542px;width:24px;height:1px;background:#1d1d1d"></div><div class="abs" style="left:1702px;top:543px;width:24px;height:1px;background:#3b3b3b"></div>
<div class="abs" style="left:1702px;top:584px;width:24px;height:1px;background:#1d1d1d"></div><div class="abs" style="left:1702px;top:585px;width:24px;height:1px;background:#3b3b3b"></div>
<svg class="abs tic" style="left:1734px;top:67px;overflow:visible" width="30" height="30" viewBox="0 0 30 30"><path d="M2.2 4.3 L2.2 12.8 L8.2 9.4 Z" fill="#b4b4b4"/><g><path d="M10 11 Q10 9 12 9 H23 Q25 9 25 11 V22 H10 V19.5 H19.5 V14.5 H15.5 V16.5 H13 V14.5 H10 Z" fill="#c9c9c9"/><rect x="13.6" y="16.3" width="1.1" height="2.4" fill="#c9c9c9"/><rect x="17" y="7" width="2.4" height="2.4" fill="#c9c9c9"/></g></svg>
<svg class="abs tic" style="left:1734px;top:98px;overflow:visible" width="30" height="30" viewBox="0 0 30 30"><g transform="translate(0 -3) scale(1.0)"><path d="M10 11 Q10 9 12 9 H23 Q25 9 25 11 V22 H10 V19.5 H19.5 V14.5 H15.5 V16.5 H13 V14.5 H10 Z" fill="#5e5e5e"/><rect x="13.6" y="16.3" width="1.1" height="2.4" fill="#5e5e5e"/><rect x="17" y="7" width="2.4" height="2.4" fill="#5e5e5e"/></g><path d="M4.5 22 H16.5" stroke="#e8e8e8" stroke-width="1.2"/><rect x="3" y="20.5" width="3" height="3" fill="#f0f0f0"/><rect x="15" y="20.5" width="3" height="3" fill="#f0f0f0"/><path d="M28 22.3 V27.5 H22.8 Z" fill="#8c8c8c"/></svg>
<svg class="abs tic" style="left:1734px;top:128px;overflow:visible" width="30" height="30" viewBox="0 0 30 30"><g transform="translate(0 -3) scale(1.0)"><path d="M10 11 Q10 9 12 9 H23 Q25 9 25 11 V22 H10 V19.5 H19.5 V14.5 H15.5 V16.5 H13 V14.5 H10 Z" fill="#5e5e5e"/><rect x="13.6" y="16.3" width="1.1" height="2.4" fill="#5e5e5e"/><rect x="17" y="7" width="2.4" height="2.4" fill="#5e5e5e"/></g><path d="M4 23.1 C8 18.8 12 26.3 18 22.3 " fill="none" stroke="#e8e8e8" stroke-width="1.5"/><circle cx="11" cy="22.1" r="1.7" fill="#f0f0f0"/><path d="M28 22.3 V27.5 H22.8 Z" fill="#8c8c8c"/></svg>
<svg class="abs tic" style="left:1734px;top:159px;overflow:visible" width="30" height="30" viewBox="0 0 30 30"><circle cx="5.2" cy="7.3" r="2" fill="#8e8e8e"/><path d="M3.6 8.5 L5.2 12 L6.8 8.5 Z" fill="#8e8e8e"/><circle cx="5.2" cy="7.3" r="0.8" fill="#2d2d2d"/><g transform="translate(1.5 1.5) scale(1.0)"><path d="M10 11 Q10 9 12 9 H23 Q25 9 25 11 V22 H10 V19.5 H19.5 V14.5 H15.5 V16.5 H13 V14.5 H10 Z" fill="#c6c6c6"/><rect x="13.6" y="16.3" width="1.1" height="2.4" fill="#c6c6c6"/><rect x="17" y="7" width="2.4" height="2.4" fill="#c6c6c6"/></g></svg>
<svg class="abs tic" style="left:1734px;top:201px;overflow:visible" width="30" height="30" viewBox="0 0 30 30"><defs><linearGradient id="irg59" x1="0" y1="0" x2="0" y2="1"><stop offset="0" stop-color="#b0b0b0"/><stop offset="1" stop-color="#6a6a6a"/></linearGradient></defs><path d="M4 19.5 Q5.5 13.5 14 12.8 H19.5 Q22.6 13.2 22.8 19.5 Z" fill="url(#irg59)"/><path d="M9.5 12.6 Q14.5 8.8 20.3 10.3 L21 12.8" fill="none" stroke="#a0a0a0" stroke-width="1.7"/><rect x="4" y="20.2" width="18.8" height="1.5" fill="#b2b2b2"/></svg>
<svg class="abs tic" style="left:1734px;top:246px;overflow:visible" width="30" height="30" viewBox="0 0 30 30"><path d="M2.2 4.3 L2.2 12.8 L8.2 9.4 Z" fill="#b4b4b4"/><path d="M13.4 10.0 Q17.0 13.3 20.6 10.0 L26.0 14.1 L23.5 17.5 L22.0 16.3 V25.0 H12.0 V16.3 L10.5 17.5 L8.0 14.1 Z" fill="#8a8a8a"/><path d="M13.4 10.3 Q17 13.5 20.6 10.3" fill="none" stroke="#5e5e5e" stroke-width="1.1"/></svg>
<svg class="abs tic" style="left:1734px;top:289px;overflow:visible" width="30" height="30" viewBox="0 0 30 30"><path d="M2.2 4.3 L2.2 12.8 L8.2 9.4 Z" fill="#b4b4b4"/><path d="M12 12 L17 9.5 L18 18 L25 16 L26 24 L11 25 Z" fill="#bfbfbf"/><path d="M19 9 L24.5 7.5 L25 15.5 L19.8 17 Z" fill="#d6d6d6"/><path d="M13 15 l3 -1 M13.5 18 l3 -1 M13.8 21 l3.4 -1 M19 20 l4.5 -1.2 M20.5 10.5 l2.8 -0.8 M20.8 13.5 l2.8 -0.8" stroke="#555" stroke-width="1"/></svg>
<svg class="abs tic" style="left:1734px;top:320px;overflow:visible" width="30" height="30" viewBox="0 0 30 30"><path d="M2.2 4.3 L2.2 12.8 L8.2 9.4 Z" fill="#b4b4b4"/><path d="M14.1 10.0 Q17.5 13.1 20.9 10.0 L26.0 13.8 L23.6 17.0 L22.3 15.9 V24.0 H12.7 V15.9 L11.4 17.0 L9.0 13.8 Z" fill="#8a8a8a"/><rect x="13.2" y="14.3" width="2.8" height="2.8" fill="#f2f2f2"/><rect x="13.2" y="17.1" width="2.8" height="2.8" fill="#222"/><rect x="13.2" y="19.9" width="2.8" height="2.8" fill="#f2f2f2"/><rect x="16.0" y="14.3" width="2.8" height="2.8" fill="#222"/><rect x="16.0" y="17.1" width="2.8" height="2.8" fill="#f2f2f2"/><rect x="16.0" y="19.9" width="2.8" height="2.8" fill="#222"/><rect x="18.8" y="14.3" width="2.8" height="2.8" fill="#f2f2f2"/><rect x="18.8" y="17.1" width="2.8" height="2.8" fill="#222"/><rect x="18.8" y="19.9" width="2.8" height="2.8" fill="#f2f2f2"/></svg>
<svg class="abs tic" style="left:1734px;top:351px;overflow:visible" width="30" height="30" viewBox="0 0 30 30"><path d="M11.5 7.0 Q15.5 10.7 19.5 7.0 L25.5 11.6 L22.7 15.5 L21.1 14.1 V24.0 H9.9 V14.1 L8.3 15.5 L5.5 11.6 Z" fill="#8a8a8a"/><rect x="10.5" y="12.5" width="3.2" height="3.2" fill="#f2f2f2"/><rect x="10.5" y="15.7" width="3.2" height="3.2" fill="#222"/><rect x="10.5" y="18.9" width="3.2" height="3.2" fill="#f2f2f2"/><rect x="13.7" y="12.5" width="3.2" height="3.2" fill="#222"/><rect x="13.7" y="15.7" width="3.2" height="3.2" fill="#f2f2f2"/><rect x="13.7" y="18.9" width="3.2" height="3.2" fill="#222"/><rect x="16.9" y="12.5" width="3.2" height="3.2" fill="#f2f2f2"/><rect x="16.9" y="15.7" width="3.2" height="3.2" fill="#222"/><rect x="16.9" y="18.9" width="3.2" height="3.2" fill="#f2f2f2"/></svg>
<svg class="abs tic" style="left:1734px;top:393px;overflow:visible" width="30" height="30" viewBox="0 0 30 30"><path d="M2.2 4.3 L2.2 12.8 L8.2 9.4 Z" fill="#b4b4b4"/><path d="M9 24 L25 8" stroke="#f0f0f0" stroke-width="2.4" stroke-dasharray="3.6 2.2"/></svg>
<svg class="abs tic" style="left:1734px;top:424px;overflow:visible" width="30" height="30" viewBox="0 0 30 30"><path d="M5 9.5 H25" stroke="#f0f0f0" stroke-width="2.4" stroke-dasharray="4 2.2"/><path d="M5 18.5 H25" stroke="#a8a8a8" stroke-width="1" stroke-dasharray="1.3 1.3"/><circle cx="5" cy="18.5" r="1.3" fill="#bbb"/><circle cx="25" cy="18.5" r="1.3" fill="#bbb"/><path d="M28 22.3 V27.5 H22.8 Z" fill="#8c8c8c"/></svg>
<svg class="abs tic" style="left:1734px;top:468px;overflow:visible" width="30" height="30" viewBox="0 0 30 30"><path d="M2.2 4.3 L2.2 12.8 L8.2 9.4 Z" fill="#b4b4b4"/><path d="M14 7 L18.5 9 L14 11 L18.5 13 L14 15 L18.5 17 L14 19 L18.5 21 L14 23" fill="none" stroke="#e6e6e6" stroke-width="1.2"/><path d="M22.5 7 V24" stroke="#a8a8a8" stroke-width="1" stroke-dasharray="1.3 1.3"/><circle cx="22.5" cy="7" r="1.3" fill="#bbb"/><circle cx="22.5" cy="24" r="1.3" fill="#bbb"/></svg>
<svg class="abs tic" style="left:1734px;top:499px;overflow:visible" width="30" height="30" viewBox="0 0 30 30"><path d="M5 8 L7 13.5 L9.2 8 L11.4 13.5 L13.6 8 L15.8 13.5 L18 8 L20.2 13.5 L22.4 8 L24.5 13.5" fill="none" stroke="#e6e6e6" stroke-width="1.3"/><path d="M5 19 H25" stroke="#a8a8a8" stroke-width="1" stroke-dasharray="1.3 1.3"/><circle cx="5" cy="19" r="1.3" fill="#bbb"/><circle cx="25" cy="19" r="1.3" fill="#bbb"/><path d="M28 22.3 V27.5 H22.8 Z" fill="#8c8c8c"/></svg>
<svg class="abs tic" style="left:1734px;top:542px;overflow:visible" width="30" height="30" viewBox="0 0 30 30"><path d="M4 13 L9 9 L12 12 L15 9 V24 H4 Z" fill="#8b8b8b"/><path d="M16 10 L20 6 L23 9 L26 7 V24 H16 Z" fill="#9f9f9f"/><circle cx="15" cy="17" r="3.6" fill="#e8e8e8" stroke="#444" stroke-width="0.9"/><path d="M15 14.8 V19.2 M12.8 17 H17.2" stroke="#333" stroke-width="1.3"/></svg>
<div class="abs" style="left:1737px;top:195px;width:24px;height:1px;background:#1d1d1d"></div><div class="abs" style="left:1737px;top:196px;width:24px;height:1px;background:#3b3b3b"></div>
<div class="abs" style="left:1737px;top:239px;width:24px;height:1px;background:#1d1d1d"></div><div class="abs" style="left:1737px;top:240px;width:24px;height:1px;background:#3b3b3b"></div>
<div class="abs" style="left:1737px;top:282px;width:24px;height:1px;background:#1d1d1d"></div><div class="abs" style="left:1737px;top:283px;width:24px;height:1px;background:#3b3b3b"></div>
<div class="abs" style="left:1737px;top:387px;width:24px;height:1px;background:#1d1d1d"></div><div class="abs" style="left:1737px;top:388px;width:24px;height:1px;background:#3b3b3b"></div>
<div class="abs" style="left:1737px;top:461px;width:24px;height:1px;background:#1d1d1d"></div><div class="abs" style="left:1737px;top:462px;width:24px;height:1px;background:#3b3b3b"></div>
<div class="abs" style="left:1737px;top:535px;width:24px;height:1px;background:#1d1d1d"></div><div class="abs" style="left:1737px;top:536px;width:24px;height:1px;background:#3b3b3b"></div>
<div class="abs status"></div>
<div class="abs" style="left:0px;top:969px;width:1800px;height:7px;background:#000"></div>
<span class="mi" style="left:14px;top:951px;font-size:9.5px;color:#e0e0e0;transform:scaleX(0.9746)" id="ver">Version: 6.1.346 (r35697)</span>
<svg class="abs" style="left:1664px;top:951px" width="120" height="18" viewBox="0 0 120 18">
<g fill="none" stroke="#555557" stroke-width="1.2">
<rect x="3" y="2.5" width="16" height="12"/><path d="M11 2.5 V14.5"/>
<rect x="32" y="3.5" width="15" height="11"/>
<rect x="60.5" y="3.5" width="16" height="11"/>
<path d="M108 6 a4 4 0 1 0 1.2 5.5" stroke-width="1.8"/><path d="M106 3 L110 6.5 L105.5 8" fill="#555557" stroke="none"/>
</g>
<text x="34.2" y="12.5" font-family="Liberation Sans, sans-serif" font-size="8" font-weight="bold" fill="#58585a">3D</text>
<text x="63.2" y="12.5" font-family="Liberation Sans, sans-serif" font-size="8" font-weight="bold" fill="#58585a">2D</text>
</svg>
<div class="abs taskbar"></div>
<svg class="abs" style="left:15px;top:987px" width="16" height="16" viewBox="0 0 16 16"><path d="M0 2.2 L6.6 1.2 V7.4 H0 Z M7.6 1.05 L16 0 V7.4 H7.6 Z M0 8.4 H6.6 V14.7 L0 13.7 Z M7.6 8.4 H16 V16 L7.6 14.85 Z" fill="#050505"/></svg>
<div class="abs" style="left:46px;top:977px;width:320px;height:36px;background:#fff;border-top:1px solid #efefef"></div>
<svg class="abs" style="left:56px;top:986px" width="18" height="18" viewBox="0 0 18 18"><circle cx="10.6" cy="6.8" r="4.8" fill="none" stroke="#111" stroke-width="1.5"/><path d="M7.2 10.3 L1 16.5" stroke="#111" stroke-width="1.6"/></svg>
<span class="tbtxt mi" style="left:83px;top:987px;font-size:14px;color:#454545;transform:scaleX(0.9657)" id="srch">Type here to search</span>
<div class="abs" style="left:383px;top:987.5px;width:14px;height:14px;border:2px solid #0a0a0a;border-radius:50%"></div>
<svg class="abs" style="left:425px;top:985px" width="20" height="19" viewBox="0 0 20 19"><g fill="none" stroke="#111" stroke-width="1.5"><rect x="3.5" y="4.5" width="9" height="9"/><path d="M2 1.5 H14 M2 16.8 H14"/><path d="M16.8 1 V17.5"/></g><circle cx="16.8" cy="5.2" r="1.9" fill="#111"/><circle cx="16.8" cy="9.5" r="1.4" fill="#dadada" stroke="#111" stroke-width="1"/></svg>
<svg class="abs" style="left:470px;top:983px" width="25" height="23" viewBox="0 0 25 23">
<path d="M1 3 H9.5 L11.5 5 H22 V9 H1 Z" fill="#f0b72f"/><rect x="1" y="1.2" width="8" height="2.6" fill="#e8a423"/>
<path d="M1 6 H24 V21 H1 Z" fill="#f9d262"/><path d="M4.5 13 H20 V21 H4.5 Z" fill="#3a8fd9"/><path d="M9.5 16.5 H15 V21 H9.5 Z" fill="#f9d262"/><path d="M4.5 13 H20 V14.6 H4.5 Z" fill="#2b6cb3"/></svg>
<div class="abs" style="left:464px;top:1010.5px;width:37px;height:2.5px;background:#c67635"></div>
<svg class="abs" style="left:516px;top:984px" width="25" height="20" viewBox="0 0 25 20"><path d="M0.5 7 L12.5 0.5 L24.5 7 V19 H0.5 Z" fill="#404040"/><path d="M3 9.5 L22.5 8.2 L14.5 14 L22 19 H3 Z" fill="#404040" stroke="#ebebeb" stroke-width="1.2" stroke-linejoin="round"/><path d="M3 9.6 L22.3 8.3 L14.6 13.9 Z" fill="#f4f4f4"/></svg>
<svg class="abs" style="left:562px;top:982px" width="25" height="25" viewBox="0 0 25 25">
<defs><linearGradient id="eg1" x1="0" y1="0" x2="1" y2="0.3"><stop offset="0" stop-color="#1f8fdc"/><stop offset="0.55" stop-color="#2fb7c8"/><stop offset="1" stop-color="#5fd45c"/></linearGradient>
<linearGradient id="eg2" x1="0" y1="0" x2="0.6" y2="1"><stop offset="0" stop-color="#1378cf"/><stop offset="1" stop-color="#0e53a4"/></linearGradient></defs>
<circle cx="12.5" cy="12.5" r="11.8" fill="url(#eg2)"/>
<path d="M1 10.5 A11.8 11.8 0 0 1 24.3 11.5 C24.3 15 21.5 16.3 19 16.3 C15.5 16.3 13.5 14.8 14.5 12.8 C15.5 10.8 13.5 9.2 11 9.2 C7 9.2 2.5 12 1 10.5 Z" fill="url(#eg1)"/>
<path d="M9.2 12.2 C7.2 14.5 8.2 19.5 13 21.2 C16 22.3 20 21.3 22.4 18.6 C19 20.3 13.5 19.3 11.8 16 C11 14.5 11.5 13 12.5 12.2 C11.5 11.2 10 11.3 9.2 12.2 Z" fill="#e9f2f9"/>
</svg>
<svg class="abs" style="left:609px;top:983px" width="23" height="23" viewBox="0 0 23 23"><circle cx="11.5" cy="11.5" r="11" fill="#0b0b0b"/>
<path d="M11.5 5.2 C9.5 3.6 7.5 3.2 6.2 3.8 C8 2.2 15 2.2 16.8 3.8 C15.5 3.2 13.5 3.6 11.5 5.2 Z" fill="#fff"/>
<path d="M11.5 8.2 C8.5 10.5 5.2 15.2 5 18.2 C3 15.8 2.5 9.5 5.4 5.6 C7 5.6 9.5 6.6 11.5 8.2 Z M11.5 8.2 C14.5 10.5 17.8 15.2 18 18.2 C20 15.8 20.5 9.5 17.6 5.6 C16 5.6 13.5 6.6 11.5 8.2 Z" fill="#fff"/>
<path d="M11.5 11 C9 13.2 6.3 17 6.2 19.2 C9 21.6 14 21.6 16.8 19.2 C16.7 17 14 13.2 11.5 11 Z" fill="#0b0b0b"/></svg>
<svg class="abs" style="left:655px;top:982px" width="24" height="24" viewBox="0 0 24 24"><rect width="24" height="24" fill="#1147d6"/><path d="M4 17.5 L10 6.5 H12.8 L6.8 17.5 Z M9.5 17.5 L15.5 6.5 H17.6 L20.5 17.5 H17.8 L16 10.5 L12.3 17.5 Z" fill="#fff"/></svg>
<svg class="abs" style="left:701px;top:984px" width="23" height="21" viewBox="0 0 23 21"><rect x="0.5" y="0.5" width="22" height="20" rx="3.5" fill="#001d34"/><text x="4.6" y="15" font-family="Liberation Sans, sans-serif" font-size="11.5" font-weight="bold" fill="#33a9ff">Ps</text></svg>
<div class="abs" style="left:736px;top:977px;width:45px;height:36px;background:#ebebeb"></div>
<div class="abs" style="left:736px;top:1010.5px;width:45px;height:2.5px;background:#c67635"></div>
<svg class="abs" style="left:747px;top:982px" width="24" height="24" viewBox="0 0 24 24"><rect x="0.5" y="0.5" width="23" height="23" rx="4.5" fill="#0c0c0e"/><circle cx="12" cy="12" r="6.6" fill="none" stroke="#f4f4f4" stroke-width="2.3" stroke-dasharray="7 1.4 8.3 1.4 8.3 1.4 6 7.7" transform="rotate(40 12 12)"/></svg>
<div class="abs" style="left:1795px;top:977px;width:1px;height:36px;background:#b4b4b4"></div>
<span class="tbtxt mi" style="left:1319px;top:986px;font-size:12px;transform:scaleX(0.9084)" id="desk">Desktop</span>
<svg class="abs" style="left:1367px;top:978px" width="9" height="8" viewBox="0 0 9 8"><path d="M1 1 L3.8 4 L1 7 M5 1 L7.8 4 L5 7" fill="none" stroke="#5a55a8" stroke-width="1"/></svg>
<svg class="abs" style="left:1456px;top:986px" width="24" height="17" viewBox="0 0 24 17"><g fill="none" stroke="#111" stroke-width="1.5"><path d="M3.5 1 H23 V13 a2.5 2.5 0 0 1 -2.5 2.5 H3 a2.2 2.2 0 0 1 -2.2 -2.2 V4 H3.5"/><path d="M3.5 1 V13"/><rect x="6.8" y="7" width="6" height="5"/><path d="M6 4 H20.5 M15 7.5 H20.5 M15 11.5 H20.5"/></g></svg>
<span class="tbtxt mi" style="left:1487px;top:987px;font-size:13.5px;transform:scaleX(0.8719)" id="temp">70°F</span>
<span class="tbtxt mi" style="left:1520.5px;top:987px;font-size:13.5px;transform:scaleX(0.9273)" id="sunny">Sunny</span>
<svg class="abs" style="left:1571px;top:988px" width="13" height="10" viewBox="0 0 13 10"><path d="M1 8 L6.5 2 L12 8" fill="none" stroke="#111" stroke-width="1.5"/></svg>
<svg class="abs" style="left:1592px;top:986px" width="16" height="14" viewBox="0 0 16 14"><rect x="3" y="4.5" width="11.5" height="7.5" fill="none" stroke="#111" stroke-width="1.3"/><rect x="14.8" y="6.5" width="1.2" height="3.5" fill="#111"/><rect x="4.5" y="6" width="6" height="4.5" fill="#111"/><path d="M1 1 H4.5 M2.8 1 V6 M1.4 3 H4.2" stroke="#111" stroke-width="1.2" fill="none"/></svg>
<svg class="abs" style="left:1615px;top:985px" width="17" height="17" viewBox="0 0 17 17"><g fill="none" stroke="#111" stroke-width="1.2"><circle cx="7.8" cy="8" r="6.8"/><ellipse cx="7.8" cy="8" rx="3" ry="6.8"/><path d="M1 8 H14.6 M2 4.5 H13.6 M2 11.5 H10"/></g><circle cx="12.6" cy="12.6" r="3.6" fill="#111"/><circle cx="12.6" cy="12.6" r="2.1" fill="none" stroke="#dadada" stroke-width="0.9"/><path d="M11.2 14 L14 11.2" stroke="#dadada" stroke-width="0.9"/></svg>
<svg class="abs" style="left:1637px;top:986px" width="17" height="15" viewBox="0 0 17 15"><path d="M1 5.2 H3.8 L7.5 1.5 V13.5 L3.8 9.8 H1 Z" fill="none" stroke="#111" stroke-width="1.2" stroke-linejoin="round"/><path d="M9.6 5 a3.6 3.6 0 0 1 0 5" fill="none" stroke="#111" stroke-width="1.1"/><path d="M11.6 3.2 a6 6 0 0 1 0 8.6" fill="none" stroke="#8a8a8a" stroke-width="1"/><path d="M13.6 1.6 a8.4 8.4 0 0 1 0 11.8" fill="none" stroke="#b0b0b0" stroke-width="1"/></svg>
<span class="tbtxt mi" style="left:1662.5px;top:986px;font-size:12px;transform:scaleX(0.7880)" id="eng">ENG</span>
<span class="tbtxt mi" style="left:1698px;top:977px;font-size:12px;transform:scaleX(0.8815)" id="time">12:11 PM</span>
<span class="tbtxt mi" style="left:1696px;top:994px;font-size:12px;transform:scaleX(0.8990)" id="date">9/20/2023</span>
<svg class="abs" style="left:1761px;top:986px" width="24" height="24" viewBox="0 0 24 24"><path d="M1 1 H15 V11.5 H8.5 L5 15 V11.5 H1 Z" fill="#111"/><path d="M3.5 4 H12.5 M3.5 6.5 H12.5 M3.5 9 H9" stroke="#dadada" stroke-width="0.8"/><circle cx="15" cy="15" r="6.8" fill="#dadada" stroke="#222" stroke-width="1"/><text x="12.3" y="19" font-family="Liberation Sans, sans-serif" font-size="10.5" fill="#111">3</text></svg>
</div></body></html>
